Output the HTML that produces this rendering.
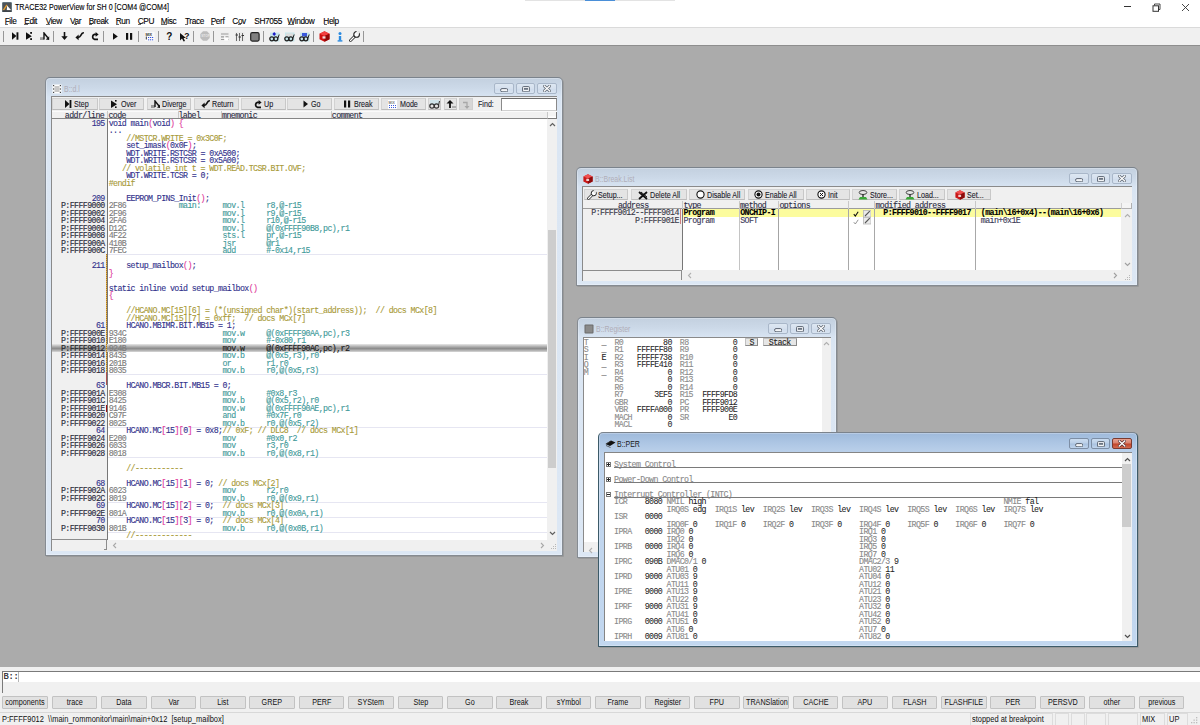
<!DOCTYPE html><html><head><meta charset="utf-8"><style>
*{margin:0;padding:0;box-sizing:border-box}
html,body{width:1200px;height:725px;overflow:hidden;background:#ababab;position:relative}
.s{position:absolute;font-family:"Liberation Sans",sans-serif;font-size:7.5px;line-height:9px;white-space:pre;color:#1a1a1a}
.m{position:absolute;font-family:"Liberation Mono",monospace;-webkit-text-stroke:0.12px currentColor;font-size:8.3px;line-height:7.5px;letter-spacing:-0.605px;white-space:pre}
svg{display:block}
.btn{position:absolute;background:#e1e1e1;border:1px solid #c2c2c2}
</style></head><body><div style="position:absolute;left:0px;top:0px;width:1200px;height:45px;background:#fff"></div>
<div style="position:absolute;left:525px;top:0px;width:150px;height:1px;background:#e3e3e3"></div>
<div style="position:absolute;left:585px;top:0px;width:30px;height:1px;background:#4a8fd8"></div>
<svg style="position:absolute;left:1.5px;top:1.5px" width="10" height="10.5"><rect x="0.3" y="0.3" width="9.4" height="9.8" rx="1.2" fill="#505458" stroke="#4a6a78" stroke-width="0.6"/><polygon points="0.6,8.3 4.4,2.4 5.4,3.5 2.2,8.3" fill="#e8a030"/><polygon points="5.1,3.4 9.2,8.3 4.8,8.3" fill="#fff"/><rect x="0.6" y="8.4" width="8.8" height="1.3" fill="#3a3e42"/></svg>
<div class="s" style="left:14.5px;top:2.9px;font-size:8.4px;transform:scaleX(0.85);transform-origin:0 0;color:#000;-webkit-text-stroke:0.12px #000">TRACE32 PowerView for SH 0 [COM4 @COM4]</div>
<div style="position:absolute;left:1124.2px;top:6px;width:7px;height:1px;background:#333"></div>
<svg style="position:absolute;left:1151.5px;top:2.5px" width="9" height="9"><path d="M2.5,2.5V1H8V6.5H6.5" stroke="#333" stroke-width="0.9" fill="none"/><rect x="1" y="2.8" width="5.5" height="5.5" fill="none" stroke="#333" stroke-width="1"/></svg>
<svg style="position:absolute;left:1180.5px;top:2.5px" width="9" height="9"><path d="M1,1L8,8M8,1L1,8" stroke="#333" stroke-width="0.9"/></svg>
<div class="s" style="left:4.7px;top:16.6px;font-size:8.3px;letter-spacing:-0.4px;color:#000;-webkit-text-stroke:0.1px #000">File</div>
<div class="s" style="left:24.3px;top:16.6px;font-size:8.3px;letter-spacing:-0.4px;color:#000;-webkit-text-stroke:0.1px #000">Edit</div>
<div class="s" style="left:45.7px;top:16.6px;font-size:8.3px;letter-spacing:-0.4px;color:#000;-webkit-text-stroke:0.1px #000">View</div>
<div class="s" style="left:70px;top:16.6px;font-size:8.3px;letter-spacing:-0.4px;color:#000;-webkit-text-stroke:0.1px #000">Var</div>
<div class="s" style="left:88.7px;top:16.6px;font-size:8.3px;letter-spacing:-0.4px;color:#000;-webkit-text-stroke:0.1px #000">Break</div>
<div class="s" style="left:115.7px;top:16.6px;font-size:8.3px;letter-spacing:-0.4px;color:#000;-webkit-text-stroke:0.1px #000">Run</div>
<div class="s" style="left:137.7px;top:16.6px;font-size:8.3px;letter-spacing:-0.4px;color:#000;-webkit-text-stroke:0.1px #000">CPU</div>
<div class="s" style="left:160.7px;top:16.6px;font-size:8.3px;letter-spacing:-0.4px;color:#000;-webkit-text-stroke:0.1px #000">Misc</div>
<div class="s" style="left:185px;top:16.6px;font-size:8.3px;letter-spacing:-0.4px;color:#000;-webkit-text-stroke:0.1px #000">Trace</div>
<div class="s" style="left:210.7px;top:16.6px;font-size:8.3px;letter-spacing:-0.4px;color:#000;-webkit-text-stroke:0.1px #000">Perf</div>
<div class="s" style="left:232.3px;top:16.6px;font-size:8.3px;letter-spacing:-0.4px;color:#000;-webkit-text-stroke:0.1px #000">Cov</div>
<div class="s" style="left:254.3px;top:16.6px;font-size:8.3px;letter-spacing:-0.4px;color:#000;-webkit-text-stroke:0.1px #000">SH7055</div>
<div class="s" style="left:287.3px;top:16.6px;font-size:8.3px;letter-spacing:-0.4px;color:#000;-webkit-text-stroke:0.1px #000">Window</div>
<div class="s" style="left:323.3px;top:16.6px;font-size:8.3px;letter-spacing:-0.4px;color:#000;-webkit-text-stroke:0.1px #000">Help</div>
<div style="position:absolute;left:0px;top:26.5px;width:1200px;height:18.5px;background:#f0f0f0;border-top:1px solid #dadada"></div>
<div style="position:absolute;left:0px;top:44.5px;width:1200px;height:1px;background:#8e8e8e"></div>
<div style="position:absolute;left:0px;top:667.4px;width:1200px;height:57.6px;background:#f0f0f0"></div>
<div style="position:absolute;left:2px;top:671px;width:1198px;height:21.5px;border-left:1px solid #7a7a7a;border-top:1px solid #7a7a7a"></div>
<div style="position:absolute;left:3px;top:672px;width:1197px;height:10px;background:#fff"></div>
<div class="m" style="left:3.4px;top:674.1px;font-size:8.8px;letter-spacing:-0.28px;-webkit-text-stroke:0.2px #1a1a2a"><span style="color:#1a1a2a">B::</span></div>
<div style="position:absolute;left:18px;top:671.5px;width:1px;height:10.5px;background:#b4b4b4"></div>
<div class="btn" style="left:2.3px;top:696.3px;width:45.7px;height:12.3px;border-radius:1px"></div>
<div class="s" style="left:2.3px;top:697.8px;width:45.7px;text-align:center;font-size:8.3px;transform:scaleX(0.87);transform-origin:50% 0;color:#111">components</div>
<div class="btn" style="left:51.7px;top:696.3px;width:45.7px;height:12.3px;border-radius:1px"></div>
<div class="s" style="left:51.7px;top:697.8px;width:45.7px;text-align:center;font-size:8.3px;transform:scaleX(0.87);transform-origin:50% 0;color:#111">trace</div>
<div class="btn" style="left:101.1px;top:696.3px;width:45.7px;height:12.3px;border-radius:1px"></div>
<div class="s" style="left:101.1px;top:697.8px;width:45.7px;text-align:center;font-size:8.3px;transform:scaleX(0.87);transform-origin:50% 0;color:#111">Data</div>
<div class="btn" style="left:150.5px;top:696.3px;width:45.7px;height:12.3px;border-radius:1px"></div>
<div class="s" style="left:150.5px;top:697.8px;width:45.7px;text-align:center;font-size:8.3px;transform:scaleX(0.87);transform-origin:50% 0;color:#111">Var</div>
<div class="btn" style="left:199.9px;top:696.3px;width:45.7px;height:12.3px;border-radius:1px"></div>
<div class="s" style="left:199.9px;top:697.8px;width:45.7px;text-align:center;font-size:8.3px;transform:scaleX(0.87);transform-origin:50% 0;color:#111">List</div>
<div class="btn" style="left:249.3px;top:696.3px;width:45.7px;height:12.3px;border-radius:1px"></div>
<div class="s" style="left:249.3px;top:697.8px;width:45.7px;text-align:center;font-size:8.3px;transform:scaleX(0.87);transform-origin:50% 0;color:#111">GREP</div>
<div class="btn" style="left:298.7px;top:696.3px;width:45.7px;height:12.3px;border-radius:1px"></div>
<div class="s" style="left:298.7px;top:697.8px;width:45.7px;text-align:center;font-size:8.3px;transform:scaleX(0.87);transform-origin:50% 0;color:#111">PERF</div>
<div class="btn" style="left:348.1px;top:696.3px;width:45.7px;height:12.3px;border-radius:1px"></div>
<div class="s" style="left:348.1px;top:697.8px;width:45.7px;text-align:center;font-size:8.3px;transform:scaleX(0.87);transform-origin:50% 0;color:#111">SYStem</div>
<div class="btn" style="left:397.5px;top:696.3px;width:45.7px;height:12.3px;border-radius:1px"></div>
<div class="s" style="left:397.5px;top:697.8px;width:45.7px;text-align:center;font-size:8.3px;transform:scaleX(0.87);transform-origin:50% 0;color:#111">Step</div>
<div class="btn" style="left:446.9px;top:696.3px;width:45.7px;height:12.3px;border-radius:1px"></div>
<div class="s" style="left:446.9px;top:697.8px;width:45.7px;text-align:center;font-size:8.3px;transform:scaleX(0.87);transform-origin:50% 0;color:#111">Go</div>
<div class="btn" style="left:496.3px;top:696.3px;width:45.7px;height:12.3px;border-radius:1px"></div>
<div class="s" style="left:496.3px;top:697.8px;width:45.7px;text-align:center;font-size:8.3px;transform:scaleX(0.87);transform-origin:50% 0;color:#111">Break</div>
<div class="btn" style="left:545.7px;top:696.3px;width:45.7px;height:12.3px;border-radius:1px"></div>
<div class="s" style="left:545.7px;top:697.8px;width:45.7px;text-align:center;font-size:8.3px;transform:scaleX(0.87);transform-origin:50% 0;color:#111">sYmbol</div>
<div class="btn" style="left:595.1px;top:696.3px;width:45.7px;height:12.3px;border-radius:1px"></div>
<div class="s" style="left:595.1px;top:697.8px;width:45.7px;text-align:center;font-size:8.3px;transform:scaleX(0.87);transform-origin:50% 0;color:#111">Frame</div>
<div class="btn" style="left:644.5px;top:696.3px;width:45.7px;height:12.3px;border-radius:1px"></div>
<div class="s" style="left:644.5px;top:697.8px;width:45.7px;text-align:center;font-size:8.3px;transform:scaleX(0.87);transform-origin:50% 0;color:#111">Register</div>
<div class="btn" style="left:693.9px;top:696.3px;width:45.7px;height:12.3px;border-radius:1px"></div>
<div class="s" style="left:693.9px;top:697.8px;width:45.7px;text-align:center;font-size:8.3px;transform:scaleX(0.87);transform-origin:50% 0;color:#111">FPU</div>
<div class="btn" style="left:743.3px;top:696.3px;width:45.7px;height:12.3px;border-radius:1px"></div>
<div class="s" style="left:743.3px;top:697.8px;width:45.7px;text-align:center;font-size:8.3px;transform:scaleX(0.87);transform-origin:50% 0;color:#111">TRANSlation</div>
<div class="btn" style="left:792.7px;top:696.3px;width:45.7px;height:12.3px;border-radius:1px"></div>
<div class="s" style="left:792.7px;top:697.8px;width:45.7px;text-align:center;font-size:8.3px;transform:scaleX(0.87);transform-origin:50% 0;color:#111">CACHE</div>
<div class="btn" style="left:842.1px;top:696.3px;width:45.7px;height:12.3px;border-radius:1px"></div>
<div class="s" style="left:842.1px;top:697.8px;width:45.7px;text-align:center;font-size:8.3px;transform:scaleX(0.87);transform-origin:50% 0;color:#111">APU</div>
<div class="btn" style="left:891.5px;top:696.3px;width:45.7px;height:12.3px;border-radius:1px"></div>
<div class="s" style="left:891.5px;top:697.8px;width:45.7px;text-align:center;font-size:8.3px;transform:scaleX(0.87);transform-origin:50% 0;color:#111">FLASH</div>
<div class="btn" style="left:940.9px;top:696.3px;width:45.7px;height:12.3px;border-radius:1px"></div>
<div class="s" style="left:940.9px;top:697.8px;width:45.7px;text-align:center;font-size:8.3px;transform:scaleX(0.87);transform-origin:50% 0;color:#111">FLASHFILE</div>
<div class="btn" style="left:990.3px;top:696.3px;width:45.7px;height:12.3px;border-radius:1px"></div>
<div class="s" style="left:990.3px;top:697.8px;width:45.7px;text-align:center;font-size:8.3px;transform:scaleX(0.87);transform-origin:50% 0;color:#111">PER</div>
<div class="btn" style="left:1039.7px;top:696.3px;width:45.7px;height:12.3px;border-radius:1px"></div>
<div class="s" style="left:1039.7px;top:697.8px;width:45.7px;text-align:center;font-size:8.3px;transform:scaleX(0.87);transform-origin:50% 0;color:#111">PERSVD</div>
<div class="btn" style="left:1089.1px;top:696.3px;width:45.7px;height:12.3px;border-radius:1px"></div>
<div class="s" style="left:1089.1px;top:697.8px;width:45.7px;text-align:center;font-size:8.3px;transform:scaleX(0.87);transform-origin:50% 0;color:#111">other</div>
<div class="btn" style="left:1138.5px;top:696.3px;width:45.7px;height:12.3px;border-radius:1px"></div>
<div class="s" style="left:1138.5px;top:697.8px;width:45.7px;text-align:center;font-size:8.3px;transform:scaleX(0.87);transform-origin:50% 0;color:#111">previous</div>
<div style="position:absolute;left:0px;top:712px;width:1200px;height:1px;background:#d8d8d8"></div>
<div class="s" style="left:2px;top:714.5px;font-size:8.3px;transform:scaleX(0.9);transform-origin:0 0;color:#111">P:FFFF9012  \\main_rommonitor\main\main+0x12  [setup_mailbox]</div>
<div style="position:absolute;left:970.4px;top:713px;width:82.60000000000002px;height:12px;border:1px solid #dcdcdc;border-bottom:none"></div>
<div class="s" style="left:972.4px;top:714.5px;font-size:8.3px;transform:scaleX(0.9);transform-origin:0 0;color:#111">stopped at breakpoint</div>
<div style="position:absolute;left:1054.5px;top:713px;width:14.0px;height:12px;border:1px solid #dcdcdc;border-bottom:none"></div>
<div style="position:absolute;left:1070.5px;top:713px;width:14.0px;height:12px;border:1px solid #dcdcdc;border-bottom:none"></div>
<div style="position:absolute;left:1086px;top:713px;width:20px;height:12px;border:1px solid #dcdcdc;border-bottom:none"></div>
<div style="position:absolute;left:1108px;top:713px;width:30px;height:12px;border:1px solid #dcdcdc;border-bottom:none"></div>
<div style="position:absolute;left:1140px;top:713px;width:25px;height:12px;border:1px solid #dcdcdc;border-bottom:none"></div>
<div class="s" style="left:1142px;top:714.5px;font-size:8.3px;transform:scaleX(0.9);transform-origin:0 0;color:#111">MIX</div>
<div style="position:absolute;left:1167px;top:713px;width:21px;height:12px;border:1px solid #dcdcdc;border-bottom:none"></div>
<div class="s" style="left:1169px;top:714.5px;font-size:8.3px;transform:scaleX(0.9);transform-origin:0 0;color:#111">UP</div>
<div style="position:absolute;left:45px;top:77px;width:518px;height:479px;background:linear-gradient(#c3d0df 0px,#ccd9e8 10px,#d8e4f2 19px,#dbe6f3 30px,#dce7f4 100%);border:1px solid #858b92;border-top-color:#7b838c;border-radius:5px 5px 1px 1px;box-shadow:inset 0 0 0 1px rgba(255,255,255,0.25),1px 1px 0 rgba(0,0,0,0.10)"></div>
<div style="position:absolute;left:51.8px;top:83.6px;width:10px;height:10px"><svg width="10" height="10"><rect x="0.5" y="0.5" width="9" height="9" fill="#fff"/><rect x="2.5" y="2" width="5" height="6" fill="#c8c8c8"/><g fill="#444"><rect x="1" y="1" width="1.2" height="1.2"/><rect x="7.8" y="1" width="1.2" height="1.2"/><rect x="1" y="4.4" width="1.2" height="1.2"/><rect x="7.8" y="4.4" width="1.2" height="1.2"/><rect x="1" y="7.8" width="1.2" height="1.2"/><rect x="7.8" y="7.8" width="1.2" height="1.2"/></g></svg></div>
<div class="s" style="left:64.2px;top:84.7px;font-size:8.7px;transform:scaleX(0.8);transform-origin:0 0;color:#b0aeb8">B::d.l</div>
<div style="position:absolute;left:494.3px;top:83.2px;width:19.700000000000003px;height:11.2px;background:linear-gradient(#dde7f2 0%,#d5e0ee 50%,#cfdcec 55%,#d8e3f0 100%);border:1px solid #a9b7c9;border-radius:2px"></div>
<svg style="position:absolute;left:499.95000000000005px;top:87.89999999999999px" width="8.5" height="4.5"><rect x="0.6" y="0.6" width="7.2" height="3.2" rx="1.4" fill="#f4f6f8" stroke="#5a6472" stroke-width="1"/></svg>
<div style="position:absolute;left:516px;top:83.2px;width:19px;height:11.2px;background:linear-gradient(#dde7f2 0%,#d5e0ee 50%,#cfdcec 55%,#d8e3f0 100%);border:1px solid #a9b7c9;border-radius:2px"></div>
<svg style="position:absolute;left:521.5px;top:85.6px" width="8" height="6.5"><rect x="0.6" y="0.6" width="6.8" height="5.2" rx="0.8" fill="#f4f6f8" stroke="#5a6472" stroke-width="1"/><rect x="2" y="2" width="4" height="1.8" fill="#6a7482"/></svg>
<div style="position:absolute;left:537px;top:83.2px;width:20px;height:11.2px;background:linear-gradient(#dde7f2 0%,#d5e0ee 50%,#cfdcec 55%,#d8e3f0 100%);border:1px solid #a9b7c9;border-radius:2px"></div>
<svg style="position:absolute;left:543.0px;top:85.2px" width="8" height="7"><path d="M1.2,1L6.8,6M6.8,1L1.2,6" stroke="#5d6672" stroke-width="2.9" stroke-linecap="square"/><path d="M1.2,1L6.8,6M6.8,1L1.2,6" stroke="#fff" stroke-width="1.3" stroke-linecap="square"/></svg>
<div style="position:absolute;left:51px;top:96px;width:506px;height:455px;background:#f0f0f0;border-left:1px solid #8a8a8a;border-top:1px solid #8a8a8a"></div>
<div style="position:absolute;left:52.2px;top:98.2px;width:45.5px;height:12.299999999999997px;background:#e4e4e4;border:1px solid #d2d2d2;border-bottom-color:#bcbcbc;border-right-color:#c8c8c8"></div>
<svg style="position:absolute;left:64.7px;top:100.3px" width="7" height="8"><polygon points="0,0 4.5,4 0,8" fill="#111"/><rect x="4.6" y="0" width="1.8" height="8" fill="#111"/></svg>
<div class="s" style="left:74.2px;top:100.10000000000001px;font-size:8.2px;transform:scaleX(0.87);transform-origin:0 0;color:#1a1a2a;-webkit-text-stroke:0.1px #1a1a2a">Step</div>
<div style="position:absolute;left:99.3px;top:98.2px;width:45.000000000000014px;height:12.299999999999997px;background:#e4e4e4;border:1px solid #d2d2d2;border-bottom-color:#bcbcbc;border-right-color:#c8c8c8"></div>
<svg style="position:absolute;left:110.5px;top:100.3px" width="8" height="8"><polygon points="0,0.5 6,4.2 0,8" fill="#111"/><rect x="4" y="0" width="1.6" height="1.6" fill="#111"/><rect x="4" y="6.4" width="1.6" height="1.6" fill="#111"/></svg>
<div class="s" style="left:120.6px;top:100.10000000000001px;font-size:8.2px;transform:scaleX(0.87);transform-origin:0 0;color:#1a1a2a;-webkit-text-stroke:0.1px #1a1a2a">Over</div>
<div style="position:absolute;left:146.5px;top:98.2px;width:44.5px;height:12.299999999999997px;background:#e4e4e4;border:1px solid #d2d2d2;border-bottom-color:#bcbcbc;border-right-color:#c8c8c8"></div>
<svg style="position:absolute;left:150.5px;top:100.3px" width="10" height="8"><rect x="0" y="5" width="4" height="3" fill="#9a9a9a"/><path d="M4,7V1L8,6" stroke="#111" stroke-width="1.4" fill="none"/><polygon points="9,8 6,7.5 9,4.5" fill="#111"/></svg>
<div class="s" style="left:162.3px;top:100.10000000000001px;font-size:8.2px;transform:scaleX(0.87);transform-origin:0 0;color:#1a1a2a;-webkit-text-stroke:0.1px #1a1a2a">Diverge</div>
<div style="position:absolute;left:193.5px;top:98.2px;width:45.0px;height:12.299999999999997px;background:#e4e4e4;border:1px solid #d2d2d2;border-bottom-color:#bcbcbc;border-right-color:#c8c8c8"></div>
<svg style="position:absolute;left:200.5px;top:100.3px" width="10" height="9"><path d="M8.8,0.9C7.6,0.6 6.6,1.6 5.8,3.4C5.2,4.8 4.3,5.4 2.8,5.4" stroke="#111" stroke-width="1.6" fill="none"/><polygon points="0.4,5.5 3.6,2.6 3.6,8.2" fill="#111"/></svg>
<div class="s" style="left:211.6px;top:100.10000000000001px;font-size:8.2px;transform:scaleX(0.87);transform-origin:0 0;color:#1a1a2a;-webkit-text-stroke:0.1px #1a1a2a">Return</div>
<div style="position:absolute;left:240.7px;top:98.2px;width:45.0px;height:12.299999999999997px;background:#e4e4e4;border:1px solid #d2d2d2;border-bottom-color:#bcbcbc;border-right-color:#c8c8c8"></div>
<svg style="position:absolute;left:253.8px;top:100.3px" width="8" height="9"><path d="M7,7.4H3.6A2.6,2.6 0 0 1 3.4,2.4H5" stroke="#111" stroke-width="1.7" fill="none"/><polygon points="4.6,0 7.6,2.4 4.6,4.8" fill="#111"/></svg>
<div class="s" style="left:263.8px;top:100.10000000000001px;font-size:8.2px;transform:scaleX(0.87);transform-origin:0 0;color:#1a1a2a;-webkit-text-stroke:0.1px #1a1a2a">Up</div>
<div style="position:absolute;left:287.3px;top:98.2px;width:45.0px;height:12.299999999999997px;background:#e4e4e4;border:1px solid #d2d2d2;border-bottom-color:#bcbcbc;border-right-color:#c8c8c8"></div>
<svg style="position:absolute;left:302.5px;top:100.3px" width="6" height="8"><polygon points="0.5,0.5 5,4 0.5,7.5" fill="#111"/></svg>
<div class="s" style="left:311.4px;top:100.10000000000001px;font-size:8.2px;transform:scaleX(0.87);transform-origin:0 0;color:#1a1a2a;-webkit-text-stroke:0.1px #1a1a2a">Go</div>
<div style="position:absolute;left:334px;top:98.2px;width:44.69999999999999px;height:12.299999999999997px;background:#e4e4e4;border:1px solid #d2d2d2;border-bottom-color:#bcbcbc;border-right-color:#c8c8c8"></div>
<svg style="position:absolute;left:343.5px;top:100.3px" width="7" height="8"><rect x="0" y="0.5" width="2.2" height="7" fill="#111"/><rect x="4" y="0.5" width="2.2" height="7" fill="#111"/></svg>
<div class="s" style="left:353.6px;top:100.10000000000001px;font-size:8.2px;transform:scaleX(0.87);transform-origin:0 0;color:#1a1a2a;-webkit-text-stroke:0.1px #1a1a2a">Break</div>
<div style="position:absolute;left:381px;top:98.2px;width:44.69999999999999px;height:12.299999999999997px;background:#e4e4e4;border:1px solid #d2d2d2;border-bottom-color:#bcbcbc;border-right-color:#c8c8c8"></div>
<svg style="position:absolute;left:388.2px;top:99.8px" width="9" height="9"><rect x="0" y="0" width="9" height="9" fill="#fff"/><text x="0.5" y="3.5" font-size="3.5" font-family="Liberation Sans" fill="#333">MIX</text><path d="M1,5.5H8M1,7.5H8" stroke="#3a5adc" stroke-width="1" stroke-dasharray="1,1"/></svg>
<div class="s" style="left:399.6px;top:100.10000000000001px;font-size:8.2px;transform:scaleX(0.87);transform-origin:0 0;color:#1a1a2a;-webkit-text-stroke:0.1px #1a1a2a">Mode</div>
<div style="position:absolute;left:427.6px;top:98.2px;width:13.399999999999977px;height:12.299999999999997px;background:#e4e4e4;border:1px solid #d2d2d2;border-bottom-color:#bcbcbc;border-right-color:#c8c8c8"></div>
<svg style="position:absolute;left:429.3px;top:99.8px" width="11" height="9"><rect x="1" y="0" width="9" height="5" fill="#cfe4ea"/><circle cx="3" cy="6" r="2.2" stroke="#333" stroke-width="1.2" fill="none"/><circle cx="7.5" cy="6" r="2.2" stroke="#333" stroke-width="1.2" fill="none"/><path d="M9.5,5.5L10.5,1" stroke="#333" stroke-width="1"/></svg>
<div style="position:absolute;left:443.6px;top:98.2px;width:13.799999999999955px;height:12.299999999999997px;background:#e4e4e4;border:1px solid #d2d2d2;border-bottom-color:#bcbcbc;border-right-color:#c8c8c8"></div>
<svg style="position:absolute;left:446px;top:100px" width="10" height="8"><path d="M4,8V2" stroke="#111" stroke-width="1.8"/><polygon points="0.5,3.5 4,0 7.5,3.5" fill="#111"/><rect x="6.5" y="6.5" width="1" height="1" fill="#111"/><rect x="8.5" y="6.5" width="1" height="1" fill="#111"/></svg>
<div style="position:absolute;left:459px;top:98.2px;width:14px;height:12.3px;background:#d6d6d6;border:1px solid #cfcfcf"></div>
<svg style="position:absolute;left:462px;top:100.5px" width="8" height="8"><path d="M1,1.5H5V6.5" stroke="#a8a8a8" stroke-width="1.3" fill="none"/><polygon points="2.5,5 5,8 7.5,5" fill="#a8a8a8"/></svg>
<div class="s" style="left:478.4px;top:99.9px;font-size:8.2px;transform:scaleX(0.87);transform-origin:0 0;color:#1a1a2a;-webkit-text-stroke:0.1px #1a1a2a">Find:</div>
<div style="position:absolute;left:500.5px;top:97.5px;width:56.5px;height:13.5px;background:#fff;border-top:1px solid #6a6a6a;border-left:1px solid #8a8a8a;border-right:1px solid #8a8a8a;border-bottom:1px solid #cfcfcf"></div>
<div style="position:absolute;left:52px;top:111.2px;width:505px;height:8.2px;background:#f0f0f0;border-top:1px solid #fafafa;border-bottom:1.4px solid #868686"></div>
<div style="position:absolute;left:107.2px;top:111.2px;width:1px;height:7px;background:#c8c8c8"></div>
<div style="position:absolute;left:177.7px;top:111.2px;width:1px;height:7px;background:#c8c8c8"></div>
<div style="position:absolute;left:221px;top:111.2px;width:1px;height:7px;background:#c8c8c8"></div>
<div style="position:absolute;left:330.7px;top:111.2px;width:1px;height:7px;background:#c8c8c8"></div>
<div class="m" style="left:64.825px;top:111.8px;"><span style="color:#2e2e44">addr/line</span></div>
<div class="m" style="left:108.5px;top:111.8px;"><span style="color:#2e2e44">code</span></div>
<div class="m" style="left:178.4px;top:111.8px;"><span style="color:#2e2e44">label</span></div>
<div class="m" style="left:222.1px;top:111.8px;"><span style="color:#2e2e44">mnemonic</span></div>
<div class="m" style="left:331.8px;top:111.8px;"><span style="color:#2e2e44">comment</span></div>
<div style="position:absolute;left:546.5px;top:111.5px;width:10.5px;height:7.5px;background:#f4f4f4;border:1px solid #7a7a7a;border-top:none;border-left:1px solid #c8c8c8;box-shadow:inset 0 -1.5px 0 #fff"></div>
<div style="position:absolute;left:52px;top:119.4px;width:55.5px;height:420.30000000000007px;background:#f0f0f0"></div>
<div style="position:absolute;left:107.5px;top:119.4px;width:439.7px;height:420.30000000000007px;background:#fff"></div>
<div style="position:absolute;left:107px;top:119.4px;width:1px;height:420.30000000000007px;background:#777"></div>
<div style="position:absolute;left:547.2px;top:119.4px;width:9.6px;height:420.30000000000007px;background:#f0f0f0"></div>
<div style="position:absolute;left:547.6px;top:230px;width:8.8px;height:238px;background:#cdcdcd"></div>
<svg style="position:absolute;left:548.5px;top:122px" width="7" height="5"><path d="M1,4L3.5,1.5L6,4" stroke="#606060" stroke-width="1.2" fill="none"/></svg>
<svg style="position:absolute;left:548.5px;top:531px" width="7" height="5"><path d="M1,1L3.5,3.5L6,1" stroke="#606060" stroke-width="1.2" fill="none"/></svg>
<div style="position:absolute;left:52px;top:539.7px;width:505px;height:10.5px;background:#f0f0f0"></div>
<div style="position:absolute;left:52px;top:539.4000000000001px;width:55px;height:1px;background:#8c8c8c"></div>
<div style="position:absolute;left:106px;top:539.7px;width:1px;height:10.4px;background:#8c8c8c"></div>
<div style="position:absolute;left:104px;top:549.3000000000001px;width:3px;height:1px;background:#8c8c8c"></div>
<svg style="position:absolute;left:112px;top:541.5px" width="5" height="7"><path d="M4,1L1.5,3.5L4,6" stroke="#a8a8a8" stroke-width="1.1" fill="none"/></svg>
<svg style="position:absolute;left:540px;top:541.5px" width="5" height="7"><path d="M1,1L3.5,3.5L1,6" stroke="#a8a8a8" stroke-width="1.1" fill="none"/></svg>
<svg style="position:absolute;left:549px;top:542px" width="8" height="8"><g fill="#b8b8b8"><rect x="6" y="2" width="1" height="1"/><rect x="4" y="4" width="1" height="1"/><rect x="6" y="4" width="1" height="1"/><rect x="2" y="6" width="1" height="1"/><rect x="4" y="6" width="1" height="1"/><rect x="6" y="6" width="1" height="1"/></g></svg>
<div style="position:absolute;left:108px;top:254.1px;width:439px;height:1px;background:#e6e6f2"></div>
<div style="position:absolute;left:108px;top:374.09999999999997px;width:439px;height:1px;background:#e6e6f2"></div>
<div style="position:absolute;left:108px;top:426.59999999999997px;width:439px;height:1px;background:#e6e6f2"></div>
<div style="position:absolute;left:108px;top:456.59999999999997px;width:439px;height:1px;background:#e6e6f2"></div>
<div style="position:absolute;left:108px;top:501.59999999999997px;width:439px;height:1px;background:#e6e6f2"></div>
<div style="position:absolute;left:108px;top:516.6px;width:439px;height:1px;background:#e6e6f2"></div>
<div style="position:absolute;left:108px;top:531.6px;width:439px;height:1px;background:#e6e6f2"></div>
<div style="position:absolute;left:52px;top:344.45px;width:495.2px;height:7.5px;background:linear-gradient(#e8e8e8 0%,#b4b4b4 30%,#8c8c8c 55%,#a8a8a8 75%,#d8d8d8 100%)"></div>
<div class="m" style="left:108.75px;top:119.7px;"><span style="color:#32328c">void main</span><span style="color:#e0389a">(</span><span style="color:#32328c">void</span><span style="color:#e0389a">)</span><span style="color:#32328c"> </span><span style="color:#e0389a">{</span></div>
<div class="m" style="left:91.625px;top:119.7px;"><span style="color:#32328c">195</span></div>
<div class="m" style="left:108.75px;top:127.2px;"><span style="color:#32328c">...</span></div>
<div class="m" style="left:108.75px;top:134.7px;"><span style="color:#32328c">    </span><span style="color:#a89a38">//MSTCR.WRITE = 0x3C0F;</span></div>
<div class="m" style="left:108.75px;top:142.2px;"><span style="color:#32328c">    set_imask</span><span style="color:#e0389a">(</span><span style="color:#32328c">0x0F</span><span style="color:#e0389a">)</span><span style="color:#32328c">;</span></div>
<div class="m" style="left:108.75px;top:149.7px;"><span style="color:#32328c">    WDT.WRITE.RSTCSR = 0xA500;</span></div>
<div class="m" style="left:108.75px;top:157.2px;"><span style="color:#32328c">    WDT.WRITE.RSTCSR = 0x5A00;</span></div>
<div class="m" style="left:108.75px;top:164.7px;"><span style="color:#32328c">   </span><span style="color:#a89a38">// volatile int t = WDT.READ.TCSR.BIT.OVF;</span></div>
<div class="m" style="left:108.75px;top:172.2px;"><span style="color:#32328c">    WDT.WRITE.TCSR = 0;</span></div>
<div class="m" style="left:108.75px;top:179.7px;"><span style="color:#a89a38">#endif</span></div>
<div class="m" style="left:108.75px;top:194.7px;"><span style="color:#32328c">    EEPROM_PINS_Init</span><span style="color:#e0389a">(</span><span style="color:#e0389a">)</span><span style="color:#32328c">;</span></div>
<div class="m" style="left:91.625px;top:194.7px;"><span style="color:#32328c">209</span></div>
<div class="m" style="left:108.75px;top:262.2px;"><span style="color:#32328c">    setup_mailbox</span><span style="color:#e0389a">(</span><span style="color:#e0389a">)</span><span style="color:#32328c">;</span></div>
<div class="m" style="left:91.625px;top:262.2px;"><span style="color:#32328c">211</span></div>
<div class="m" style="left:108.75px;top:269.7px;"><span style="color:#e0389a">}</span></div>
<div class="m" style="left:108.75px;top:284.7px;"><span style="color:#32328c">static inline void setup_mailbox</span><span style="color:#e0389a">(</span><span style="color:#e0389a">)</span></div>
<div class="m" style="left:108.75px;top:292.2px;"><span style="color:#e0389a">{</span></div>
<div class="m" style="left:108.75px;top:307.2px;"><span style="color:#32328c">    </span><span style="color:#a89a38">//HCANO.MC[15][6] = (*(unsigned char*)(start_address));  // docs MCx[8]</span></div>
<div class="m" style="left:108.75px;top:314.7px;"><span style="color:#32328c">    </span><span style="color:#a89a38">//HCANO.MC[15][7] = 0xff;  // docs MCx[7]</span></div>
<div class="m" style="left:108.75px;top:322.2px;"><span style="color:#32328c">    HCANO.MBIMR.BIT.MB15 = 1;</span></div>
<div class="m" style="left:96.0px;top:322.2px;"><span style="color:#32328c">61</span></div>
<div class="m" style="left:108.75px;top:382.2px;"><span style="color:#32328c">    HCANO.MBCR.BIT.MB15 = 0;</span></div>
<div class="m" style="left:96.0px;top:382.2px;"><span style="color:#32328c">63</span></div>
<div class="m" style="left:108.75px;top:427.2px;"><span style="color:#32328c">    HCANO.MC</span><span style="color:#e0389a">[</span><span style="color:#32328c">15</span><span style="color:#e0389a">]</span><span style="color:#e0389a">[</span><span style="color:#32328c">0</span><span style="color:#e0389a">]</span><span style="color:#32328c"> = 0x8;</span><span style="color:#a89a38">// 0xF; // DLC8  // docs MCx[1]</span></div>
<div class="m" style="left:96.0px;top:427.2px;"><span style="color:#32328c">64</span></div>
<div class="m" style="left:108.75px;top:464.7px;"><span style="color:#32328c">    </span><span style="color:#a89a38">//-----------</span></div>
<div class="m" style="left:108.75px;top:479.7px;"><span style="color:#32328c">    HCANO.MC</span><span style="color:#e0389a">[</span><span style="color:#32328c">15</span><span style="color:#e0389a">]</span><span style="color:#e0389a">[</span><span style="color:#32328c">1</span><span style="color:#e0389a">]</span><span style="color:#32328c"> = 0; </span><span style="color:#a89a38">// docs MCx[2]</span></div>
<div class="m" style="left:96.0px;top:479.7px;"><span style="color:#32328c">68</span></div>
<div class="m" style="left:108.75px;top:502.2px;"><span style="color:#32328c">    HCANO.MC</span><span style="color:#e0389a">[</span><span style="color:#32328c">15</span><span style="color:#e0389a">]</span><span style="color:#e0389a">[</span><span style="color:#32328c">2</span><span style="color:#e0389a">]</span><span style="color:#32328c"> = 0;  </span><span style="color:#a89a38">// docs MCx[3]</span></div>
<div class="m" style="left:96.0px;top:502.2px;"><span style="color:#32328c">69</span></div>
<div class="m" style="left:108.75px;top:517.2px;"><span style="color:#32328c">    HCANO.MC</span><span style="color:#e0389a">[</span><span style="color:#32328c">15</span><span style="color:#e0389a">]</span><span style="color:#e0389a">[</span><span style="color:#32328c">3</span><span style="color:#e0389a">]</span><span style="color:#32328c"> = 0;  </span><span style="color:#a89a38">// docs MCx[4]</span></div>
<div class="m" style="left:96.0px;top:517.2px;"><span style="color:#32328c">70</span></div>
<div class="m" style="left:108.75px;top:532.2px;"><span style="color:#32328c">    </span><span style="color:#a89a38">//-------------</span></div>
<div class="m" style="left:61.0px;top:202.2px;"><span style="color:#2a2a3a">P:FFFF9000</span></div>
<div class="m" style="left:108.75px;top:202.2px;"><span style="color:#7c7c7c">2F86</span></div>
<div class="m" style="left:178.75px;top:202.2px;"><span style="color:#3f9a9a">main:</span></div>
<div class="m" style="left:222.5px;top:202.2px;"><span style="color:#3f9a9a">mov.l</span></div>
<div class="m" style="left:266.25px;top:202.2px;"><span style="color:#3f9a9a">r8,@-r15</span></div>
<div class="m" style="left:61.0px;top:209.7px;"><span style="color:#2a2a3a">P:FFFF9002</span></div>
<div class="m" style="left:108.75px;top:209.7px;"><span style="color:#7c7c7c">2F96</span></div>
<div class="m" style="left:222.5px;top:209.7px;"><span style="color:#3f9a9a">mov.l</span></div>
<div class="m" style="left:266.25px;top:209.7px;"><span style="color:#3f9a9a">r9,@-r15</span></div>
<div class="m" style="left:61.0px;top:217.2px;"><span style="color:#2a2a3a">P:FFFF9004</span></div>
<div class="m" style="left:108.75px;top:217.2px;"><span style="color:#7c7c7c">2FA6</span></div>
<div class="m" style="left:222.5px;top:217.2px;"><span style="color:#3f9a9a">mov.l</span></div>
<div class="m" style="left:266.25px;top:217.2px;"><span style="color:#3f9a9a">r10,@-r15</span></div>
<div class="m" style="left:61.0px;top:224.7px;"><span style="color:#2a2a3a">P:FFFF9006</span></div>
<div class="m" style="left:108.75px;top:224.7px;"><span style="color:#7c7c7c">D12C</span></div>
<div class="m" style="left:222.5px;top:224.7px;"><span style="color:#3f9a9a">mov.l</span></div>
<div class="m" style="left:266.25px;top:224.7px;"><span style="color:#3f9a9a">@(0xFFFF90B8,pc),r1</span></div>
<div class="m" style="left:61.0px;top:232.2px;"><span style="color:#2a2a3a">P:FFFF9008</span></div>
<div class="m" style="left:108.75px;top:232.2px;"><span style="color:#7c7c7c">4F22</span></div>
<div class="m" style="left:222.5px;top:232.2px;"><span style="color:#3f9a9a">sts.l</span></div>
<div class="m" style="left:266.25px;top:232.2px;"><span style="color:#3f9a9a">pr,@-r15</span></div>
<div class="m" style="left:61.0px;top:239.7px;"><span style="color:#2a2a3a">P:FFFF900A</span></div>
<div class="m" style="left:108.75px;top:239.7px;"><span style="color:#7c7c7c">410B</span></div>
<div class="m" style="left:222.5px;top:239.7px;"><span style="color:#3f9a9a">jsr</span></div>
<div class="m" style="left:266.25px;top:239.7px;"><span style="color:#3f9a9a">@r1</span></div>
<div class="m" style="left:61.0px;top:247.2px;"><span style="color:#2a2a3a">P:FFFF900C</span></div>
<div class="m" style="left:108.75px;top:247.2px;"><span style="color:#7c7c7c">7FEC</span></div>
<div class="m" style="left:222.5px;top:247.2px;"><span style="color:#3f9a9a">add</span></div>
<div class="m" style="left:266.25px;top:247.2px;"><span style="color:#3f9a9a">#-0x14,r15</span></div>
<div class="m" style="left:61.0px;top:329.7px;"><span style="color:#2a2a3a">P:FFFF900E</span></div>
<div class="m" style="left:108.75px;top:329.7px;"><span style="color:#7c7c7c">934C</span></div>
<div class="m" style="left:222.5px;top:329.7px;"><span style="color:#3f9a9a">mov.w</span></div>
<div class="m" style="left:266.25px;top:329.7px;"><span style="color:#3f9a9a">@(0xFFFF90AA,pc),r3</span></div>
<div class="m" style="left:61.0px;top:337.2px;"><span style="color:#2a2a3a">P:FFFF9010</span></div>
<div class="m" style="left:108.75px;top:337.2px;"><span style="color:#7c7c7c">E180</span></div>
<div class="m" style="left:222.5px;top:337.2px;"><span style="color:#3f9a9a">mov</span></div>
<div class="m" style="left:266.25px;top:337.2px;"><span style="color:#3f9a9a">#-0x80,r1</span></div>
<div class="m" style="left:61.0px;top:344.7px;"><span style="color:#1e1e28">P:FFFF9012</span></div>
<div class="m" style="left:108.75px;top:344.7px;"><span style="color:#7c7c7c">924B</span></div>
<div class="m" style="left:222.5px;top:344.7px;"><span style="color:#1a1a1a">mov.w</span></div>
<div class="m" style="left:266.25px;top:344.7px;"><span style="color:#1a1a1a">@(0xFFFF90AC,pc),r2</span></div>
<div class="m" style="left:61.0px;top:352.2px;"><span style="color:#2a2a3a">P:FFFF9014</span></div>
<div class="m" style="left:108.75px;top:352.2px;"><span style="color:#7c7c7c">8435</span></div>
<div class="m" style="left:222.5px;top:352.2px;"><span style="color:#3f9a9a">mov.b</span></div>
<div class="m" style="left:266.25px;top:352.2px;"><span style="color:#3f9a9a">@(0x5,r3),r0</span></div>
<div class="m" style="left:61.0px;top:359.7px;"><span style="color:#2a2a3a">P:FFFF9016</span></div>
<div class="m" style="left:108.75px;top:359.7px;"><span style="color:#7c7c7c">201B</span></div>
<div class="m" style="left:222.5px;top:359.7px;"><span style="color:#3f9a9a">or</span></div>
<div class="m" style="left:266.25px;top:359.7px;"><span style="color:#3f9a9a">r1,r0</span></div>
<div class="m" style="left:61.0px;top:367.2px;"><span style="color:#2a2a3a">P:FFFF9018</span></div>
<div class="m" style="left:108.75px;top:367.2px;"><span style="color:#7c7c7c">8035</span></div>
<div class="m" style="left:222.5px;top:367.2px;"><span style="color:#3f9a9a">mov.b</span></div>
<div class="m" style="left:266.25px;top:367.2px;"><span style="color:#3f9a9a">r0,@(0x5,r3)</span></div>
<div class="m" style="left:61.0px;top:389.7px;"><span style="color:#2a2a3a">P:FFFF901A</span></div>
<div class="m" style="left:108.75px;top:389.7px;"><span style="color:#7c7c7c">E308</span></div>
<div class="m" style="left:222.5px;top:389.7px;"><span style="color:#3f9a9a">mov</span></div>
<div class="m" style="left:266.25px;top:389.7px;"><span style="color:#3f9a9a">#0x8,r3</span></div>
<div class="m" style="left:61.0px;top:397.2px;"><span style="color:#2a2a3a">P:FFFF901C</span></div>
<div class="m" style="left:108.75px;top:397.2px;"><span style="color:#7c7c7c">8425</span></div>
<div class="m" style="left:222.5px;top:397.2px;"><span style="color:#3f9a9a">mov.b</span></div>
<div class="m" style="left:266.25px;top:397.2px;"><span style="color:#3f9a9a">@(0x5,r2),r0</span></div>
<div class="m" style="left:61.0px;top:404.7px;"><span style="color:#2a2a3a">P:FFFF901E</span></div>
<div class="m" style="left:108.75px;top:404.7px;"><span style="color:#7c7c7c">9146</span></div>
<div class="m" style="left:222.5px;top:404.7px;"><span style="color:#3f9a9a">mov.w</span></div>
<div class="m" style="left:266.25px;top:404.7px;"><span style="color:#3f9a9a">@(0xFFFF90AE,pc),r1</span></div>
<div class="m" style="left:61.0px;top:412.2px;"><span style="color:#2a2a3a">P:FFFF9020</span></div>
<div class="m" style="left:108.75px;top:412.2px;"><span style="color:#7c7c7c">C97F</span></div>
<div class="m" style="left:222.5px;top:412.2px;"><span style="color:#3f9a9a">and</span></div>
<div class="m" style="left:266.25px;top:412.2px;"><span style="color:#3f9a9a">#0x7F,r0</span></div>
<div class="m" style="left:61.0px;top:419.7px;"><span style="color:#2a2a3a">P:FFFF9022</span></div>
<div class="m" style="left:108.75px;top:419.7px;"><span style="color:#7c7c7c">8025</span></div>
<div class="m" style="left:222.5px;top:419.7px;"><span style="color:#3f9a9a">mov.b</span></div>
<div class="m" style="left:266.25px;top:419.7px;"><span style="color:#3f9a9a">r0,@(0x5,r2)</span></div>
<div class="m" style="left:61.0px;top:434.7px;"><span style="color:#2a2a3a">P:FFFF9024</span></div>
<div class="m" style="left:108.75px;top:434.7px;"><span style="color:#7c7c7c">E200</span></div>
<div class="m" style="left:222.5px;top:434.7px;"><span style="color:#3f9a9a">mov</span></div>
<div class="m" style="left:266.25px;top:434.7px;"><span style="color:#3f9a9a">#0x0,r2</span></div>
<div class="m" style="left:61.0px;top:442.2px;"><span style="color:#2a2a3a">P:FFFF9026</span></div>
<div class="m" style="left:108.75px;top:442.2px;"><span style="color:#7c7c7c">6033</span></div>
<div class="m" style="left:222.5px;top:442.2px;"><span style="color:#3f9a9a">mov</span></div>
<div class="m" style="left:266.25px;top:442.2px;"><span style="color:#3f9a9a">r3,r0</span></div>
<div class="m" style="left:61.0px;top:449.7px;"><span style="color:#2a2a3a">P:FFFF9028</span></div>
<div class="m" style="left:108.75px;top:449.7px;"><span style="color:#7c7c7c">8018</span></div>
<div class="m" style="left:222.5px;top:449.7px;"><span style="color:#3f9a9a">mov.b</span></div>
<div class="m" style="left:266.25px;top:449.7px;"><span style="color:#3f9a9a">r0,@(0x8,r1)</span></div>
<div class="m" style="left:61.0px;top:487.2px;"><span style="color:#2a2a3a">P:FFFF902A</span></div>
<div class="m" style="left:108.75px;top:487.2px;"><span style="color:#7c7c7c">6023</span></div>
<div class="m" style="left:222.5px;top:487.2px;"><span style="color:#3f9a9a">mov</span></div>
<div class="m" style="left:266.25px;top:487.2px;"><span style="color:#3f9a9a">r2,r0</span></div>
<div class="m" style="left:61.0px;top:494.7px;"><span style="color:#2a2a3a">P:FFFF902C</span></div>
<div class="m" style="left:108.75px;top:494.7px;"><span style="color:#7c7c7c">8019</span></div>
<div class="m" style="left:222.5px;top:494.7px;"><span style="color:#3f9a9a">mov.b</span></div>
<div class="m" style="left:266.25px;top:494.7px;"><span style="color:#3f9a9a">r0,@(0x9,r1)</span></div>
<div class="m" style="left:61.0px;top:509.7px;"><span style="color:#2a2a3a">P:FFFF902E</span></div>
<div class="m" style="left:108.75px;top:509.7px;"><span style="color:#7c7c7c">801A</span></div>
<div class="m" style="left:222.5px;top:509.7px;"><span style="color:#3f9a9a">mov.b</span></div>
<div class="m" style="left:266.25px;top:509.7px;"><span style="color:#3f9a9a">r0,@(0x0A,r1)</span></div>
<div class="m" style="left:61.0px;top:524.7px;"><span style="color:#2a2a3a">P:FFFF9030</span></div>
<div class="m" style="left:108.75px;top:524.7px;"><span style="color:#7c7c7c">801B</span></div>
<div class="m" style="left:222.5px;top:524.7px;"><span style="color:#3f9a9a">mov.b</span></div>
<div class="m" style="left:266.25px;top:524.7px;"><span style="color:#3f9a9a">r0,@(0x0B,r1)</span></div>
<div style="position:absolute;left:105.6px;top:254px;width:1.3px;height:118px;background:repeating-linear-gradient(#b07030 0px,#b07030 1px,#e8c040 1px,#e8c040 2px)"></div>
<div style="position:absolute;left:105.8px;top:372px;width:1px;height:13px;background:#b05050"></div>
<div style="position:absolute;left:105.8px;top:404.7px;width:1.5px;height:7.5px;background:#a01010"></div>
<div style="position:absolute;left:576px;top:167px;width:562px;height:119px;background:linear-gradient(#c3d0df 0px,#ccd9e8 10px,#d8e4f2 19px,#dbe6f3 30px,#dce7f4 100%);border:1px solid #858b92;border-top-color:#7b838c;border-radius:5px 5px 1px 1px;box-shadow:inset 0 0 0 1px rgba(255,255,255,0.25),1px 1px 0 rgba(0,0,0,0.10)"></div>
<div style="position:absolute;left:582.8px;top:173.6px;width:10px;height:10px"><svg width="10" height="10" style="display:block"><polygon points="5,0.3 9.6,2.5 9.6,7.5 5,9.7 0.4,7.5 0.4,2.5" fill="#c81818"/><polygon points="5,0.3 9.6,2.5 5,4.6 0.4,2.5" fill="#f05050"/><polygon points="5,4.6 9.6,2.5 9.6,7.5 5,9.7" fill="#8c0c0c"/><rect x="3.3" y="4.8" width="2.8" height="2.2" fill="#fff" opacity="0.8"/></svg></div>
<div class="s" style="left:595.2px;top:174.7px;font-size:8.7px;transform:scaleX(0.8);transform-origin:0 0;color:#b0aeb8">B::Break.List</div>
<div style="position:absolute;left:1069.3px;top:173.2px;width:19.700000000000003px;height:11.2px;background:linear-gradient(#dde7f2 0%,#d5e0ee 50%,#cfdcec 55%,#d8e3f0 100%);border:1px solid #a9b7c9;border-radius:2px"></div>
<svg style="position:absolute;left:1074.9499999999998px;top:177.89999999999998px" width="8.5" height="4.5"><rect x="0.6" y="0.6" width="7.2" height="3.2" rx="1.4" fill="#f4f6f8" stroke="#5a6472" stroke-width="1"/></svg>
<div style="position:absolute;left:1091px;top:173.2px;width:19px;height:11.2px;background:linear-gradient(#dde7f2 0%,#d5e0ee 50%,#cfdcec 55%,#d8e3f0 100%);border:1px solid #a9b7c9;border-radius:2px"></div>
<svg style="position:absolute;left:1096.5px;top:175.6px" width="8" height="6.5"><rect x="0.6" y="0.6" width="6.8" height="5.2" rx="0.8" fill="#f4f6f8" stroke="#5a6472" stroke-width="1"/><rect x="2" y="2" width="4" height="1.8" fill="#6a7482"/></svg>
<div style="position:absolute;left:1112px;top:173.2px;width:20px;height:11.2px;background:linear-gradient(#dde7f2 0%,#d5e0ee 50%,#cfdcec 55%,#d8e3f0 100%);border:1px solid #a9b7c9;border-radius:2px"></div>
<svg style="position:absolute;left:1118.0px;top:175.2px" width="8" height="7"><path d="M1.2,1L6.8,6M6.8,1L1.2,6" stroke="#5d6672" stroke-width="2.9" stroke-linecap="square"/><path d="M1.2,1L6.8,6M6.8,1L1.2,6" stroke="#fff" stroke-width="1.3" stroke-linecap="square"/></svg>
<div style="position:absolute;left:582px;top:186px;width:550px;height:95px;background:#f0f0f0;border-left:1px solid #8a8a8a;border-top:1px solid #8a8a8a"></div>
<div style="position:absolute;left:583.6px;top:188.9px;width:44.60000000000002px;height:11.299999999999983px;background:#e4e4e4;border:1px solid #d2d2d2;border-bottom-color:#bcbcbc;border-right-color:#c8c8c8"></div>
<svg style="position:absolute;left:587px;top:190px" width="10" height="10"><path d="M1.5,8.5L5.5,4.5" stroke="#222" stroke-width="2.6" stroke-linecap="round"/><path d="M1.5,8.5L5.5,4.5" stroke="#fff" stroke-width="1.2" stroke-linecap="round"/><circle cx="6.8" cy="3.2" r="2.6" fill="#fff" stroke="#222" stroke-width="1"/><rect x="6.5" y="0" width="3" height="3" fill="#e4e4e4" transform="rotate(45 8 1.5)"/></svg>
<div class="s" style="left:597.5px;top:190.8px;font-size:8.2px;transform:scaleX(0.87);transform-origin:0 0;color:#1a1a2a;-webkit-text-stroke:0.1px #1a1a2a">Setup...</div>
<div style="position:absolute;left:631px;top:188.9px;width:56.200000000000045px;height:11.299999999999983px;background:#e4e4e4;border:1px solid #d2d2d2;border-bottom-color:#bcbcbc;border-right-color:#c8c8c8"></div>
<svg style="position:absolute;left:637.5px;top:190.5px" width="10" height="9"><path d="M1,1L9,8M9,1L1,8" stroke="#111" stroke-width="1.8"/><path d="M3,1L9,6" stroke="#111" stroke-width="1"/></svg>
<div class="s" style="left:649.5px;top:190.8px;font-size:8.2px;transform:scaleX(0.87);transform-origin:0 0;color:#1a1a2a;-webkit-text-stroke:0.1px #1a1a2a">Delete All</div>
<div style="position:absolute;left:689.3px;top:188.9px;width:55.90000000000009px;height:11.299999999999983px;background:#e4e4e4;border:1px solid #d2d2d2;border-bottom-color:#bcbcbc;border-right-color:#c8c8c8"></div>
<svg style="position:absolute;left:695.5px;top:189.8px" width="9" height="9"><circle cx="4.5" cy="4.5" r="3.6" fill="#fff" stroke="#111" stroke-width="1.1"/></svg>
<div class="s" style="left:707px;top:190.8px;font-size:8.2px;transform:scaleX(0.87);transform-origin:0 0;color:#1a1a2a;-webkit-text-stroke:0.1px #1a1a2a">Disable All</div>
<div style="position:absolute;left:747.5px;top:188.9px;width:56.700000000000045px;height:11.299999999999983px;background:#e4e4e4;border:1px solid #d2d2d2;border-bottom-color:#bcbcbc;border-right-color:#c8c8c8"></div>
<svg style="position:absolute;left:753.5px;top:189.8px" width="9" height="9"><circle cx="4.5" cy="4.5" r="3.6" fill="#fff" stroke="#111" stroke-width="1.1"/><circle cx="4.5" cy="4.5" r="2" fill="#111"/></svg>
<div class="s" style="left:764.6px;top:190.8px;font-size:8.2px;transform:scaleX(0.87);transform-origin:0 0;color:#1a1a2a;-webkit-text-stroke:0.1px #1a1a2a">Enable All</div>
<div style="position:absolute;left:806.3px;top:188.9px;width:43.700000000000045px;height:11.299999999999983px;background:#e4e4e4;border:1px solid #d2d2d2;border-bottom-color:#bcbcbc;border-right-color:#c8c8c8"></div>
<svg style="position:absolute;left:817px;top:189.8px" width="9" height="9"><circle cx="4.5" cy="4.5" r="3.6" fill="#fff" stroke="#111" stroke-width="1.1"/><path d="M3,3L6,6M6,3L3,6" stroke="#111" stroke-width="1"/></svg>
<div class="s" style="left:828.3px;top:190.8px;font-size:8.2px;transform:scaleX(0.87);transform-origin:0 0;color:#1a1a2a;-webkit-text-stroke:0.1px #1a1a2a">Init</div>
<div style="position:absolute;left:852px;top:188.9px;width:44.700000000000045px;height:11.299999999999983px;background:#e4e4e4;border:1px solid #d2d2d2;border-bottom-color:#bcbcbc;border-right-color:#c8c8c8"></div>
<svg style="position:absolute;left:857.5px;top:190px" width="10" height="10"><ellipse cx="5" cy="2.5" rx="3.8" ry="2" fill="#e8e8e8" stroke="#333" stroke-width="0.9"/><rect x="4.3" y="4" width="1.4" height="3" fill="#333"/><polygon points="0.5,9.5 2,7 8,7 9.5,9.5" fill="#3aa838"/></svg>
<div class="s" style="left:869.6px;top:190.8px;font-size:8.2px;transform:scaleX(0.87);transform-origin:0 0;color:#1a1a2a;-webkit-text-stroke:0.1px #1a1a2a">Store...</div>
<div style="position:absolute;left:899.2px;top:188.9px;width:46.0px;height:11.299999999999983px;background:#e4e4e4;border:1px solid #d2d2d2;border-bottom-color:#bcbcbc;border-right-color:#c8c8c8"></div>
<svg style="position:absolute;left:904.5px;top:190px" width="10" height="10"><ellipse cx="5" cy="2.5" rx="3.8" ry="2" fill="#e8e8e8" stroke="#333" stroke-width="0.9"/><rect x="4.3" y="4" width="1.4" height="3" fill="#333"/><polygon points="0.5,9.5 2,7 8,7 9.5,9.5" fill="#3aa838"/></svg>
<div class="s" style="left:916.5px;top:190.8px;font-size:8.2px;transform:scaleX(0.87);transform-origin:0 0;color:#1a1a2a;-webkit-text-stroke:0.1px #1a1a2a">Load...</div>
<div style="position:absolute;left:946.7px;top:188.9px;width:44.59999999999991px;height:11.299999999999983px;background:#e4e4e4;border:1px solid #d2d2d2;border-bottom-color:#bcbcbc;border-right-color:#c8c8c8"></div>
<div style="position:absolute;left:955px;top:190px;width:10px;height:10px"><svg width="10" height="10" style="display:block"><polygon points="5,0.3 9.6,2.5 9.6,7.5 5,9.7 0.4,7.5 0.4,2.5" fill="#c81818"/><polygon points="5,0.3 9.6,2.5 5,4.6 0.4,2.5" fill="#f05050"/><polygon points="5,4.6 9.6,2.5 9.6,7.5 5,9.7" fill="#8c0c0c"/><rect x="3.3" y="4.8" width="2.8" height="2.2" fill="#fff" opacity="0.8"/></svg></div>
<div class="s" style="left:967.3px;top:190.8px;font-size:8.2px;transform:scaleX(0.87);transform-origin:0 0;color:#1a1a2a;-webkit-text-stroke:0.1px #1a1a2a">Set...</div>
<div style="position:absolute;left:583px;top:201.0px;width:549px;height:8px;background:#f0f0f0;border-bottom:1px solid #9c9c9c"></div>
<div style="position:absolute;left:682px;top:201.0px;width:1px;height:7.5px;background:#c8c8c8"></div>
<div style="position:absolute;left:739px;top:201.0px;width:1px;height:7.5px;background:#c8c8c8"></div>
<div style="position:absolute;left:778px;top:201.0px;width:1px;height:7.5px;background:#c8c8c8"></div>
<div style="position:absolute;left:848px;top:201.0px;width:1px;height:7.5px;background:#c8c8c8"></div>
<div style="position:absolute;left:874px;top:201.0px;width:1px;height:7.5px;background:#c8c8c8"></div>
<div style="position:absolute;left:975px;top:201.0px;width:1px;height:7.5px;background:#c8c8c8"></div>
<div class="m" style="left:618px;top:201.6px;"><span style="color:#2e2e44">address</span></div>
<div class="m" style="left:683.5px;top:201.6px;"><span style="color:#2e2e44">type</span></div>
<div class="m" style="left:740px;top:201.6px;"><span style="color:#2e2e44">method</span></div>
<div class="m" style="left:779.5px;top:201.6px;"><span style="color:#2e2e44">options</span></div>
<div class="m" style="left:875.5px;top:201.6px;"><span style="color:#2e2e44">modified address</span></div>
<div style="position:absolute;left:1121px;top:202.5px;width:10.5px;height:6.5px;background:#f4f4f4;border:1px solid #b0b0b0;border-top:none;border-left-color:#d0d0d0"></div>
<div style="position:absolute;left:583px;top:209.2px;width:99px;height:61.10000000000002px;background:#f0f0f0"></div>
<div style="position:absolute;left:682.5px;top:209.2px;width:438.5px;height:61.10000000000002px;background:#fff"></div>
<div style="position:absolute;left:682.5px;top:209.2px;width:438.5px;height:7.5px;background:#fcfc9e"></div>
<div style="position:absolute;left:682px;top:209.2px;width:1px;height:61.10000000000002px;background:#777"></div>
<div style="position:absolute;left:739px;top:209.2px;width:1px;height:61.10000000000002px;background:#c4c4c4"></div>
<div style="position:absolute;left:778px;top:209.2px;width:1px;height:61.10000000000002px;background:#a4a4a4"></div>
<div style="position:absolute;left:848px;top:209.2px;width:1px;height:61.10000000000002px;background:#a8a8a8"></div>
<div style="position:absolute;left:874px;top:209.2px;width:1px;height:61.10000000000002px;background:#a8a8a8"></div>
<div style="position:absolute;left:975px;top:209.2px;width:1px;height:61.10000000000002px;background:#a8a8a8"></div>
<div style="position:absolute;left:1121px;top:209.2px;width:11px;height:61.10000000000002px;background:#f0f0f0"></div>
<svg style="position:absolute;left:1123.5px;top:213px" width="7" height="5"><path d="M1,4L3.5,1.5L6,4" stroke="#b0b0b0" stroke-width="1.1" fill="none"/></svg>
<svg style="position:absolute;left:1123.5px;top:262px" width="7" height="5"><path d="M1,1L3.5,3.5L6,1" stroke="#a0a0a0" stroke-width="1.1" fill="none"/></svg>
<div style="position:absolute;left:583px;top:270.3px;width:549px;height:10.5px;background:#f0f0f0"></div>
<div style="position:absolute;left:583px;top:270.0px;width:99px;height:1px;background:#8c8c8c"></div>
<div style="position:absolute;left:681px;top:270.3px;width:1px;height:10px;background:#8c8c8c"></div>
<svg style="position:absolute;left:687px;top:272px" width="5" height="7"><path d="M4,1L1.5,3.5L4,6" stroke="#b0b0b0" stroke-width="1.1" fill="none"/></svg>
<svg style="position:absolute;left:1113px;top:272px" width="5" height="7"><path d="M1,1L3.5,3.5L1,6" stroke="#a0a0a0" stroke-width="1.1" fill="none"/></svg>
<svg style="position:absolute;left:1123px;top:272.5px" width="8" height="8"><g fill="#b8b8b8"><rect x="6" y="2" width="1" height="1"/><rect x="4" y="4" width="1" height="1"/><rect x="6" y="4" width="1" height="1"/><rect x="2" y="6" width="1" height="1"/><rect x="4" y="6" width="1" height="1"/><rect x="6" y="6" width="1" height="1"/></g></svg>
<div class="m" style="left:591.3px;top:209.29999999999998px;"><span style="color:#3a3a48">P:FFFF9012--FFFF9014</span></div>
<div class="m" style="left:635.05px;top:216.79999999999998px;"><span style="color:#3a3a48">P:FFFF901E</span></div>
<div style="position:absolute;left:680px;top:209.29999999999998px;width:1.2px;height:15px;background:#d08080"></div>
<div class="m" style="left:683.5px;top:209.29999999999998px;font-weight:bold"><span style="color:#000">Program</span></div>
<div class="m" style="left:740.2px;top:209.29999999999998px;font-weight:bold"><span style="color:#000">ONCHIP-I</span></div>
<div class="m" style="left:683.5px;top:216.79999999999998px;"><span style="color:#3c3a58">Program</span></div>
<div class="m" style="left:740.2px;top:216.79999999999998px;"><span style="color:#3c3a58">SOFT</span></div>
<div class="m" style="left:883.3px;top:209.29999999999998px;font-weight:bold"><span style="color:#000">P:FFFF9010--FFFF9017</span></div>
<div class="m" style="left:980.8px;top:209.29999999999998px;font-weight:bold"><span style="color:#000">(main\16+0x4)--(main\16+0x6)</span></div>
<div class="m" style="left:980.8px;top:216.79999999999998px;"><span style="color:#3c3a58">main+0x1E</span></div>
<svg style="position:absolute;left:853px;top:211px" width="6" height="6"><path d="M0.8,3.2L2.3,5L5.2,0.8" stroke="#111" stroke-width="1.1" fill="none"/></svg>
<svg style="position:absolute;left:853px;top:218.5px" width="6" height="6"><path d="M0.8,3.2L2.3,5L5.2,0.8" stroke="#888" stroke-width="0.9" fill="none"/></svg>
<svg style="position:absolute;left:862.5px;top:209.8px" width="8.5" height="7.5"><rect x="0.5" y="0.5" width="7.5" height="6.5" fill="#eaeaea" stroke="#b8b8b8" stroke-width="0.8"/><path d="M2,6L6.8,1.2" stroke="#555" stroke-width="1.1"/></svg>
<svg style="position:absolute;left:862.5px;top:217.3px" width="8.5" height="7.5"><rect x="0.5" y="0.5" width="7.5" height="6.5" fill="#eaeaea" stroke="#b8b8b8" stroke-width="0.8"/><path d="M2,6L6.8,1.2" stroke="#555" stroke-width="1.1"/></svg>
<div style="position:absolute;left:577px;top:317px;width:260px;height:241px;background:linear-gradient(#c3d0df 0px,#ccd9e8 10px,#d8e4f2 19px,#dbe6f3 30px,#dce7f4 100%);border:1px solid #858b92;border-top-color:#7b838c;border-radius:5px 5px 1px 1px;box-shadow:inset 0 0 0 1px rgba(255,255,255,0.25),1px 1px 0 rgba(0,0,0,0.10)"></div>
<div style="position:absolute;left:583.8px;top:323.6px;width:10px;height:10px"><svg width="10" height="10" style="display:block"><rect x="0.5" y="0.5" width="9" height="9" rx="1" fill="#6a6a6a"/><rect x="1.5" y="1.5" width="7" height="7" fill="#8a8a8a"/></svg></div>
<div class="s" style="left:596.2px;top:324.7px;font-size:8.7px;transform:scaleX(0.8);transform-origin:0 0;color:#b0aeb8">B::Register</div>
<div style="position:absolute;left:768.3px;top:323.2px;width:19.700000000000003px;height:11.2px;background:linear-gradient(#dde7f2 0%,#d5e0ee 50%,#cfdcec 55%,#d8e3f0 100%);border:1px solid #a9b7c9;border-radius:2px"></div>
<svg style="position:absolute;left:773.9499999999999px;top:327.90000000000003px" width="8.5" height="4.5"><rect x="0.6" y="0.6" width="7.2" height="3.2" rx="1.4" fill="#f4f6f8" stroke="#5a6472" stroke-width="1"/></svg>
<div style="position:absolute;left:790px;top:323.2px;width:19px;height:11.2px;background:linear-gradient(#dde7f2 0%,#d5e0ee 50%,#cfdcec 55%,#d8e3f0 100%);border:1px solid #a9b7c9;border-radius:2px"></div>
<svg style="position:absolute;left:795.5px;top:325.6px" width="8" height="6.5"><rect x="0.6" y="0.6" width="6.8" height="5.2" rx="0.8" fill="#f4f6f8" stroke="#5a6472" stroke-width="1"/><rect x="2" y="2" width="4" height="1.8" fill="#6a7482"/></svg>
<div style="position:absolute;left:811px;top:323.2px;width:20px;height:11.2px;background:linear-gradient(#dde7f2 0%,#d5e0ee 50%,#cfdcec 55%,#d8e3f0 100%);border:1px solid #a9b7c9;border-radius:2px"></div>
<svg style="position:absolute;left:817.0px;top:325.2px" width="8" height="7"><path d="M1.2,1L6.8,6M6.8,1L1.2,6" stroke="#5d6672" stroke-width="2.9" stroke-linecap="square"/><path d="M1.2,1L6.8,6M6.8,1L1.2,6" stroke="#fff" stroke-width="1.3" stroke-linecap="square"/></svg>
<div style="position:absolute;left:583px;top:337px;width:248px;height:215px;background:#fff;border-left:1px solid #8a8a8a;border-top:1px solid #8a8a8a"></div>
<div style="position:absolute;left:821.5px;top:337.5px;width:9.6px;height:204px;background:#f0f0f0"></div>
<svg style="position:absolute;left:822.5px;top:341px" width="7" height="5"><path d="M1,4L3.5,1.5L6,4" stroke="#b0b0b0" stroke-width="1.1" fill="none"/></svg>
<div style="position:absolute;left:583.5px;top:541.5px;width:247.5px;height:10.5px;background:#f0f0f0"></div>
<svg style="position:absolute;left:588px;top:547px" width="5" height="7"><path d="M4,1L1.5,3.5L4,6" stroke="#b0b0b0" stroke-width="1.1" fill="none"/></svg>
<div class="m" style="left:583.8px;top:338.5px;"><span style="color:#8c8c8c">T</span></div>
<div class="m" style="left:601.5px;top:338.5px;"><span style="color:#1e1e1e">_</span></div>
<div class="m" style="left:583.8px;top:346.0px;"><span style="color:#8c8c8c">S</span></div>
<div class="m" style="left:601.5px;top:346.0px;"><span style="color:#1e1e1e">_</span></div>
<div class="m" style="left:583.8px;top:353.5px;"><span style="color:#8c8c8c">I</span></div>
<div class="m" style="left:601.5px;top:353.5px;"><span style="color:#1e1e1e">E</span></div>
<div class="m" style="left:583.8px;top:361.0px;"><span style="color:#8c8c8c">Q</span></div>
<div class="m" style="left:601.5px;top:361.0px;"><span style="color:#1e1e1e">_</span></div>
<div class="m" style="left:583.8px;top:368.5px;"><span style="color:#8c8c8c">M</span></div>
<div class="m" style="left:601.5px;top:368.5px;"><span style="color:#1e1e1e">_</span></div>
<div class="m" style="left:614.5px;top:338.5px;"><span style="color:#8c8c8c">R0</span></div>
<div class="m" style="left:663.05px;top:338.5px;-webkit-text-stroke:0.05px #222"><span style="color:#1e1e1e">80</span></div>
<div class="m" style="left:614.5px;top:346.0px;"><span style="color:#8c8c8c">R1</span></div>
<div class="m" style="left:636.8px;top:346.0px;-webkit-text-stroke:0.05px #222"><span style="color:#1e1e1e">FFFFFF80</span></div>
<div class="m" style="left:614.5px;top:353.5px;"><span style="color:#8c8c8c">R2</span></div>
<div class="m" style="left:636.8px;top:353.5px;-webkit-text-stroke:0.05px #222"><span style="color:#1e1e1e">FFFFF738</span></div>
<div class="m" style="left:614.5px;top:361.0px;"><span style="color:#8c8c8c">R3</span></div>
<div class="m" style="left:636.8px;top:361.0px;-webkit-text-stroke:0.05px #222"><span style="color:#1e1e1e">FFFFE410</span></div>
<div class="m" style="left:614.5px;top:368.5px;"><span style="color:#8c8c8c">R4</span></div>
<div class="m" style="left:667.425px;top:368.5px;-webkit-text-stroke:0.05px #222"><span style="color:#1e1e1e">0</span></div>
<div class="m" style="left:614.5px;top:376.0px;"><span style="color:#8c8c8c">R5</span></div>
<div class="m" style="left:667.425px;top:376.0px;-webkit-text-stroke:0.05px #222"><span style="color:#1e1e1e">0</span></div>
<div class="m" style="left:614.5px;top:383.5px;"><span style="color:#8c8c8c">R6</span></div>
<div class="m" style="left:667.425px;top:383.5px;-webkit-text-stroke:0.05px #222"><span style="color:#1e1e1e">0</span></div>
<div class="m" style="left:614.5px;top:391.0px;"><span style="color:#8c8c8c">R7</span></div>
<div class="m" style="left:654.3px;top:391.0px;-webkit-text-stroke:0.05px #222"><span style="color:#1e1e1e">3EF5</span></div>
<div class="m" style="left:614.5px;top:398.5px;"><span style="color:#8c8c8c">GBR</span></div>
<div class="m" style="left:667.425px;top:398.5px;-webkit-text-stroke:0.05px #222"><span style="color:#1e1e1e">0</span></div>
<div class="m" style="left:614.5px;top:406.0px;"><span style="color:#8c8c8c">VBR</span></div>
<div class="m" style="left:636.8px;top:406.0px;-webkit-text-stroke:0.05px #222"><span style="color:#1e1e1e">FFFFA000</span></div>
<div class="m" style="left:614.5px;top:413.5px;"><span style="color:#8c8c8c">MACH</span></div>
<div class="m" style="left:667.425px;top:413.5px;-webkit-text-stroke:0.05px #222"><span style="color:#1e1e1e">0</span></div>
<div class="m" style="left:614.5px;top:421.0px;"><span style="color:#8c8c8c">MACL</span></div>
<div class="m" style="left:667.425px;top:421.0px;-webkit-text-stroke:0.05px #222"><span style="color:#1e1e1e">0</span></div>
<div class="m" style="left:679.8px;top:338.5px;"><span style="color:#8c8c8c">R8</span></div>
<div class="m" style="left:732.825px;top:338.5px;-webkit-text-stroke:0.05px #222"><span style="color:#1e1e1e">0</span></div>
<div class="m" style="left:679.8px;top:346.0px;"><span style="color:#8c8c8c">R9</span></div>
<div class="m" style="left:732.825px;top:346.0px;-webkit-text-stroke:0.05px #222"><span style="color:#1e1e1e">0</span></div>
<div class="m" style="left:679.8px;top:353.5px;"><span style="color:#8c8c8c">R10</span></div>
<div class="m" style="left:732.825px;top:353.5px;-webkit-text-stroke:0.05px #222"><span style="color:#1e1e1e">0</span></div>
<div class="m" style="left:679.8px;top:361.0px;"><span style="color:#8c8c8c">R11</span></div>
<div class="m" style="left:732.825px;top:361.0px;-webkit-text-stroke:0.05px #222"><span style="color:#1e1e1e">0</span></div>
<div class="m" style="left:679.8px;top:368.5px;"><span style="color:#8c8c8c">R12</span></div>
<div class="m" style="left:732.825px;top:368.5px;-webkit-text-stroke:0.05px #222"><span style="color:#1e1e1e">0</span></div>
<div class="m" style="left:679.8px;top:376.0px;"><span style="color:#8c8c8c">R13</span></div>
<div class="m" style="left:732.825px;top:376.0px;-webkit-text-stroke:0.05px #222"><span style="color:#1e1e1e">0</span></div>
<div class="m" style="left:679.8px;top:383.5px;"><span style="color:#8c8c8c">R14</span></div>
<div class="m" style="left:732.825px;top:383.5px;-webkit-text-stroke:0.05px #222"><span style="color:#1e1e1e">0</span></div>
<div class="m" style="left:679.8px;top:391.0px;"><span style="color:#8c8c8c">R15</span></div>
<div class="m" style="left:702.2px;top:391.0px;-webkit-text-stroke:0.05px #222"><span style="color:#1e1e1e">FFFF9FD8</span></div>
<div class="m" style="left:679.8px;top:398.5px;"><span style="color:#8c8c8c">PC</span></div>
<div class="m" style="left:702.2px;top:398.5px;-webkit-text-stroke:0.05px #222"><span style="color:#1e1e1e">FFFF9012</span></div>
<div class="m" style="left:679.8px;top:406.0px;"><span style="color:#8c8c8c">PR</span></div>
<div class="m" style="left:702.2px;top:406.0px;-webkit-text-stroke:0.05px #222"><span style="color:#1e1e1e">FFFF900E</span></div>
<div class="m" style="left:679.8px;top:413.5px;"><span style="color:#8c8c8c">SR</span></div>
<div class="m" style="left:728.45px;top:413.5px;-webkit-text-stroke:0.05px #222"><span style="color:#1e1e1e">E0</span></div>
<div style="position:absolute;left:745.4px;top:337.9px;width:12.8px;height:7.8px;background:#e6e6e6;border:1px solid #c0c0c0;border-bottom-color:#8a8a8a;border-right-color:#8a8a8a"></div>
<div class="m" style="left:749.5px;top:338.7px;"><span style="color:#1e1e1e">S</span></div>
<div style="position:absolute;left:762.6px;top:337.9px;width:34.9px;height:7.8px;background:#e6e6e6;border:1px solid #c0c0c0;border-bottom-color:#8a8a8a;border-right-color:#8a8a8a"></div>
<div class="m" style="left:768.8px;top:338.7px;"><span style="color:#1e1e1e">Stack</span></div>
<div style="position:absolute;left:598px;top:432px;width:540px;height:215px;background:linear-gradient(#9fbadb 0px,#adc6e4 10px,#bad0ea 19px,#c0d5ee 30px,#c2d7ef 100%);border:1px solid #3c5a68;border-top-color:#7b838c;border-radius:5px 5px 1px 1px;box-shadow:inset 0 0 0 1px rgba(255,255,255,0.25),1px 1px 0 rgba(0,0,0,0.10)"></div>
<div style="position:absolute;left:604.8px;top:438.6px;width:10px;height:10px"><svg width="11" height="9" style="display:block"><polygon points="0.5,5 6,1.5 10.5,3.5 5,7" fill="#111"/><path d="M1,6.5L5.5,8.5M2.5,4.2L1,5M4,3.2L2.5,4M5.5,2.3L4,3" stroke="#444" stroke-width="0.8"/></svg></div>
<div class="s" style="left:617.2px;top:439.7px;font-size:8.7px;transform:scaleX(0.8);transform-origin:0 0;color:#1a1a1a">B::PER</div>
<div style="position:absolute;left:1069.3px;top:438.2px;width:19.700000000000003px;height:11.2px;background:linear-gradient(#cadcf0 0%,#bcd0e8 45%,#a9c2e0 55%,#bfd4ec 100%);border:1px solid #7d8ea5;border-radius:2px"></div>
<svg style="position:absolute;left:1074.9499999999998px;top:442.90000000000003px" width="8.5" height="4.5"><rect x="0.6" y="0.6" width="7.2" height="3.2" rx="1.4" fill="#f4f6f8" stroke="#5a6472" stroke-width="1"/></svg>
<div style="position:absolute;left:1091px;top:438.2px;width:19px;height:11.2px;background:linear-gradient(#cadcf0 0%,#bcd0e8 45%,#a9c2e0 55%,#bfd4ec 100%);border:1px solid #7d8ea5;border-radius:2px"></div>
<svg style="position:absolute;left:1096.5px;top:440.6px" width="8" height="6.5"><rect x="0.6" y="0.6" width="6.8" height="5.2" rx="0.8" fill="#f4f6f8" stroke="#5a6472" stroke-width="1"/><rect x="2" y="2" width="4" height="1.8" fill="#6a7482"/></svg>
<div style="position:absolute;left:1112px;top:438.2px;width:20px;height:11.2px;background:linear-gradient(#e8a090 0%,#d9826e 45%,#c2452a 55%,#d06a50 100%);border:1px solid #7a3a30;border-radius:2px"></div>
<svg style="position:absolute;left:1118.0px;top:440.2px" width="8" height="7"><path d="M1.2,1L6.8,6M6.8,1L1.2,6" stroke="#5a3030" stroke-width="2.9" stroke-linecap="square"/><path d="M1.2,1L6.8,6M6.8,1L1.2,6" stroke="#fff" stroke-width="1.3" stroke-linecap="square"/></svg>
<div style="position:absolute;left:604px;top:452px;width:528px;height:189px;background:#fff;border-left:1px solid #858585;border-top:1px solid #858585"></div>
<div style="position:absolute;left:1121.8px;top:452.5px;width:10px;height:188.5px;background:#f0f0f0"></div>
<div style="position:absolute;left:1122.4px;top:464px;width:8.8px;height:63px;background:#cdcdcd"></div>
<svg style="position:absolute;left:1123.5px;top:456.5px" width="7" height="5"><path d="M1,4L3.5,1.5L6,4" stroke="#505050" stroke-width="1.2" fill="none"/></svg>
<svg style="position:absolute;left:1123.5px;top:633.5px" width="7" height="5"><path d="M1,1L3.5,3.5L6,1" stroke="#505050" stroke-width="1.2" fill="none"/></svg>
<div style="position:absolute;left:605.5px;top:462.1px;width:5.2px;height:5.2px;border:1px solid #7a7a7a;background:#fff"></div>
<div style="position:absolute;left:606.6px;top:464.2px;width:3px;height:1px;background:#222"></div>
<div style="position:absolute;left:607.6px;top:463.2px;width:1px;height:3px;background:#222"></div>
<div class="m" style="left:614.1px;top:460.5px;"><span style="color:#8a8a8a">System Control</span></div>
<div style="position:absolute;left:614px;top:466.9px;width:507.8px;height:1.3px;background:#7a7a7a"></div>
<div style="position:absolute;left:605.5px;top:477.1px;width:5.2px;height:5.2px;border:1px solid #7a7a7a;background:#fff"></div>
<div style="position:absolute;left:606.6px;top:479.2px;width:3px;height:1px;background:#222"></div>
<div style="position:absolute;left:607.6px;top:478.2px;width:1px;height:3px;background:#222"></div>
<div class="m" style="left:614.1px;top:475.5px;"><span style="color:#8a8a8a">Power-Down Control</span></div>
<div style="position:absolute;left:614px;top:481.9px;width:507.8px;height:1.3px;background:#7a7a7a"></div>
<div style="position:absolute;left:605.5px;top:492.1px;width:5.2px;height:5.2px;border:1px solid #7a7a7a;background:#fff"></div>
<div style="position:absolute;left:606.6px;top:494.2px;width:3px;height:1px;background:#222"></div>
<div class="m" style="left:614.1px;top:490.5px;"><span style="color:#8a8a8a">Interrupt Controller (INTC)</span></div>
<div style="position:absolute;left:614px;top:496.9px;width:507.8px;height:1.3px;background:#7a7a7a"></div>
<div class="m" style="left:614.1px;top:498.0px;"><span style="color:#8a8a8a">ICR</span></div>
<div class="m" style="left:644.725px;top:498.0px;-webkit-text-stroke:0.05px #222"><span style="color:#222">8080</span></div>
<div class="m" style="left:666.6px;top:498.0px;"><span style="color:#8a8a8a">NMIL</span></div>
<div class="m" style="left:688.475px;top:498.0px;-webkit-text-stroke:0.05px #222"><span style="color:#222">high</span></div>
<div class="m" style="left:1003.475px;top:498.0px;"><span style="color:#8a8a8a">NMIE</span></div>
<div class="m" style="left:1025.35px;top:498.0px;-webkit-text-stroke:0.05px #222"><span style="color:#222">fal</span></div>
<div class="m" style="left:666.6px;top:505.5px;"><span style="color:#8a8a8a">IRQ0S</span></div>
<div class="m" style="left:692.85px;top:505.5px;-webkit-text-stroke:0.05px #222"><span style="color:#222">edg</span></div>
<div class="m" style="left:714.725px;top:505.5px;"><span style="color:#8a8a8a">IRQ1S</span></div>
<div class="m" style="left:740.975px;top:505.5px;-webkit-text-stroke:0.05px #222"><span style="color:#222">lev</span></div>
<div class="m" style="left:762.85px;top:505.5px;"><span style="color:#8a8a8a">IRQ2S</span></div>
<div class="m" style="left:789.1px;top:505.5px;-webkit-text-stroke:0.05px #222"><span style="color:#222">lev</span></div>
<div class="m" style="left:810.975px;top:505.5px;"><span style="color:#8a8a8a">IRQ3S</span></div>
<div class="m" style="left:837.225px;top:505.5px;-webkit-text-stroke:0.05px #222"><span style="color:#222">lev</span></div>
<div class="m" style="left:859.1px;top:505.5px;"><span style="color:#8a8a8a">IRQ4S</span></div>
<div class="m" style="left:885.35px;top:505.5px;-webkit-text-stroke:0.05px #222"><span style="color:#222">lev</span></div>
<div class="m" style="left:907.225px;top:505.5px;"><span style="color:#8a8a8a">IRQ5S</span></div>
<div class="m" style="left:933.475px;top:505.5px;-webkit-text-stroke:0.05px #222"><span style="color:#222">lev</span></div>
<div class="m" style="left:955.35px;top:505.5px;"><span style="color:#8a8a8a">IRQ6S</span></div>
<div class="m" style="left:981.6px;top:505.5px;-webkit-text-stroke:0.05px #222"><span style="color:#222">lev</span></div>
<div class="m" style="left:1003.475px;top:505.5px;"><span style="color:#8a8a8a">IRQ7S</span></div>
<div class="m" style="left:1029.725px;top:505.5px;-webkit-text-stroke:0.05px #222"><span style="color:#222">lev</span></div>
<div class="m" style="left:614.1px;top:513.0px;"><span style="color:#8a8a8a">ISR</span></div>
<div class="m" style="left:644.725px;top:513.0px;-webkit-text-stroke:0.05px #222"><span style="color:#222">0000</span></div>
<div class="m" style="left:666.6px;top:520.5px;"><span style="color:#8a8a8a">IRQ0F</span></div>
<div class="m" style="left:692.85px;top:520.5px;-webkit-text-stroke:0.05px #222"><span style="color:#222">0</span></div>
<div class="m" style="left:714.725px;top:520.5px;"><span style="color:#8a8a8a">IRQ1F</span></div>
<div class="m" style="left:740.975px;top:520.5px;-webkit-text-stroke:0.05px #222"><span style="color:#222">0</span></div>
<div class="m" style="left:762.85px;top:520.5px;"><span style="color:#8a8a8a">IRQ2F</span></div>
<div class="m" style="left:789.1px;top:520.5px;-webkit-text-stroke:0.05px #222"><span style="color:#222">0</span></div>
<div class="m" style="left:810.975px;top:520.5px;"><span style="color:#8a8a8a">IRQ3F</span></div>
<div class="m" style="left:837.225px;top:520.5px;-webkit-text-stroke:0.05px #222"><span style="color:#222">0</span></div>
<div class="m" style="left:859.1px;top:520.5px;"><span style="color:#8a8a8a">IRQ4F</span></div>
<div class="m" style="left:885.35px;top:520.5px;-webkit-text-stroke:0.05px #222"><span style="color:#222">0</span></div>
<div class="m" style="left:907.225px;top:520.5px;"><span style="color:#8a8a8a">IRQ5F</span></div>
<div class="m" style="left:933.475px;top:520.5px;-webkit-text-stroke:0.05px #222"><span style="color:#222">0</span></div>
<div class="m" style="left:955.35px;top:520.5px;"><span style="color:#8a8a8a">IRQ6F</span></div>
<div class="m" style="left:981.6px;top:520.5px;-webkit-text-stroke:0.05px #222"><span style="color:#222">0</span></div>
<div class="m" style="left:1003.475px;top:520.5px;"><span style="color:#8a8a8a">IRQ7F</span></div>
<div class="m" style="left:1029.725px;top:520.5px;-webkit-text-stroke:0.05px #222"><span style="color:#222">0</span></div>
<div class="m" style="left:614.1px;top:528.0px;"><span style="color:#8a8a8a">IPRA</span></div>
<div class="m" style="left:644.725px;top:528.0px;-webkit-text-stroke:0.05px #222"><span style="color:#222">0000</span></div>
<div class="m" style="left:666.6px;top:528.0px;"><span style="color:#8a8a8a">IRQ0</span></div>
<div class="m" style="left:688.475px;top:528.0px;-webkit-text-stroke:0.05px #222"><span style="color:#222">0</span></div>
<div class="m" style="left:666.6px;top:535.5px;"><span style="color:#8a8a8a">IRQ2</span></div>
<div class="m" style="left:688.475px;top:535.5px;-webkit-text-stroke:0.05px #222"><span style="color:#222">0</span></div>
<div class="m" style="left:614.1px;top:543.0px;"><span style="color:#8a8a8a">IPRB</span></div>
<div class="m" style="left:644.725px;top:543.0px;-webkit-text-stroke:0.05px #222"><span style="color:#222">0000</span></div>
<div class="m" style="left:666.6px;top:543.0px;"><span style="color:#8a8a8a">IRQ4</span></div>
<div class="m" style="left:688.475px;top:543.0px;-webkit-text-stroke:0.05px #222"><span style="color:#222">0</span></div>
<div class="m" style="left:666.6px;top:550.5px;"><span style="color:#8a8a8a">IRQ6</span></div>
<div class="m" style="left:688.475px;top:550.5px;-webkit-text-stroke:0.05px #222"><span style="color:#222">0</span></div>
<div class="m" style="left:614.1px;top:558.0px;"><span style="color:#8a8a8a">IPRC</span></div>
<div class="m" style="left:644.725px;top:558.0px;-webkit-text-stroke:0.05px #222"><span style="color:#222">090B</span></div>
<div class="m" style="left:666.6px;top:558.0px;"><span style="color:#8a8a8a">DMAC0/1</span></div>
<div class="m" style="left:701.6px;top:558.0px;-webkit-text-stroke:0.05px #222"><span style="color:#222">0</span></div>
<div class="m" style="left:666.6px;top:565.5px;"><span style="color:#8a8a8a">ATU01</span></div>
<div class="m" style="left:692.85px;top:565.5px;-webkit-text-stroke:0.05px #222"><span style="color:#222">0</span></div>
<div class="m" style="left:614.1px;top:573.0px;"><span style="color:#8a8a8a">IPRD</span></div>
<div class="m" style="left:644.725px;top:573.0px;-webkit-text-stroke:0.05px #222"><span style="color:#222">9000</span></div>
<div class="m" style="left:666.6px;top:573.0px;"><span style="color:#8a8a8a">ATU03</span></div>
<div class="m" style="left:692.85px;top:573.0px;-webkit-text-stroke:0.05px #222"><span style="color:#222">9</span></div>
<div class="m" style="left:666.6px;top:580.5px;"><span style="color:#8a8a8a">ATU11</span></div>
<div class="m" style="left:692.85px;top:580.5px;-webkit-text-stroke:0.05px #222"><span style="color:#222">0</span></div>
<div class="m" style="left:614.1px;top:588.0px;"><span style="color:#8a8a8a">IPRE</span></div>
<div class="m" style="left:644.725px;top:588.0px;-webkit-text-stroke:0.05px #222"><span style="color:#222">9000</span></div>
<div class="m" style="left:666.6px;top:588.0px;"><span style="color:#8a8a8a">ATU13</span></div>
<div class="m" style="left:692.85px;top:588.0px;-webkit-text-stroke:0.05px #222"><span style="color:#222">9</span></div>
<div class="m" style="left:666.6px;top:595.5px;"><span style="color:#8a8a8a">ATU22</span></div>
<div class="m" style="left:692.85px;top:595.5px;-webkit-text-stroke:0.05px #222"><span style="color:#222">0</span></div>
<div class="m" style="left:614.1px;top:603.0px;"><span style="color:#8a8a8a">IPRF</span></div>
<div class="m" style="left:644.725px;top:603.0px;-webkit-text-stroke:0.05px #222"><span style="color:#222">9000</span></div>
<div class="m" style="left:666.6px;top:603.0px;"><span style="color:#8a8a8a">ATU31</span></div>
<div class="m" style="left:692.85px;top:603.0px;-webkit-text-stroke:0.05px #222"><span style="color:#222">9</span></div>
<div class="m" style="left:666.6px;top:610.5px;"><span style="color:#8a8a8a">ATU41</span></div>
<div class="m" style="left:692.85px;top:610.5px;-webkit-text-stroke:0.05px #222"><span style="color:#222">0</span></div>
<div class="m" style="left:614.1px;top:618.0px;"><span style="color:#8a8a8a">IPRG</span></div>
<div class="m" style="left:644.725px;top:618.0px;-webkit-text-stroke:0.05px #222"><span style="color:#222">0000</span></div>
<div class="m" style="left:666.6px;top:618.0px;"><span style="color:#8a8a8a">ATU51</span></div>
<div class="m" style="left:692.85px;top:618.0px;-webkit-text-stroke:0.05px #222"><span style="color:#222">0</span></div>
<div class="m" style="left:666.6px;top:625.5px;"><span style="color:#8a8a8a">ATU6</span></div>
<div class="m" style="left:688.475px;top:625.5px;-webkit-text-stroke:0.05px #222"><span style="color:#222">0</span></div>
<div class="m" style="left:614.1px;top:633.0px;"><span style="color:#8a8a8a">IPRH</span></div>
<div class="m" style="left:644.725px;top:633.0px;-webkit-text-stroke:0.05px #222"><span style="color:#222">0009</span></div>
<div class="m" style="left:666.6px;top:633.0px;"><span style="color:#8a8a8a">ATU81</span></div>
<div class="m" style="left:692.85px;top:633.0px;-webkit-text-stroke:0.05px #222"><span style="color:#222">0</span></div>
<div class="m" style="left:859.1px;top:528.0px;"><span style="color:#8a8a8a">IRQ1</span></div>
<div class="m" style="left:880.975px;top:528.0px;-webkit-text-stroke:0.05px #222"><span style="color:#222">0</span></div>
<div class="m" style="left:859.1px;top:535.5px;"><span style="color:#8a8a8a">IRQ3</span></div>
<div class="m" style="left:880.975px;top:535.5px;-webkit-text-stroke:0.05px #222"><span style="color:#222">0</span></div>
<div class="m" style="left:859.1px;top:543.0px;"><span style="color:#8a8a8a">IRQ5</span></div>
<div class="m" style="left:880.975px;top:543.0px;-webkit-text-stroke:0.05px #222"><span style="color:#222">0</span></div>
<div class="m" style="left:859.1px;top:550.5px;"><span style="color:#8a8a8a">IRQ7</span></div>
<div class="m" style="left:880.975px;top:550.5px;-webkit-text-stroke:0.05px #222"><span style="color:#222">0</span></div>
<div class="m" style="left:859.1px;top:558.0px;"><span style="color:#8a8a8a">DMAC2/3</span></div>
<div class="m" style="left:894.1px;top:558.0px;-webkit-text-stroke:0.05px #222"><span style="color:#222">9</span></div>
<div class="m" style="left:859.1px;top:565.5px;"><span style="color:#8a8a8a">ATU02</span></div>
<div class="m" style="left:885.35px;top:565.5px;-webkit-text-stroke:0.05px #222"><span style="color:#222">11</span></div>
<div class="m" style="left:859.1px;top:573.0px;"><span style="color:#8a8a8a">ATU04</span></div>
<div class="m" style="left:885.35px;top:573.0px;-webkit-text-stroke:0.05px #222"><span style="color:#222">0</span></div>
<div class="m" style="left:859.1px;top:580.5px;"><span style="color:#8a8a8a">ATU12</span></div>
<div class="m" style="left:885.35px;top:580.5px;-webkit-text-stroke:0.05px #222"><span style="color:#222">0</span></div>
<div class="m" style="left:859.1px;top:588.0px;"><span style="color:#8a8a8a">ATU21</span></div>
<div class="m" style="left:885.35px;top:588.0px;-webkit-text-stroke:0.05px #222"><span style="color:#222">0</span></div>
<div class="m" style="left:859.1px;top:595.5px;"><span style="color:#8a8a8a">ATU23</span></div>
<div class="m" style="left:885.35px;top:595.5px;-webkit-text-stroke:0.05px #222"><span style="color:#222">0</span></div>
<div class="m" style="left:859.1px;top:603.0px;"><span style="color:#8a8a8a">ATU32</span></div>
<div class="m" style="left:885.35px;top:603.0px;-webkit-text-stroke:0.05px #222"><span style="color:#222">0</span></div>
<div class="m" style="left:859.1px;top:610.5px;"><span style="color:#8a8a8a">ATU42</span></div>
<div class="m" style="left:885.35px;top:610.5px;-webkit-text-stroke:0.05px #222"><span style="color:#222">0</span></div>
<div class="m" style="left:859.1px;top:618.0px;"><span style="color:#8a8a8a">ATU52</span></div>
<div class="m" style="left:885.35px;top:618.0px;-webkit-text-stroke:0.05px #222"><span style="color:#222">0</span></div>
<div class="m" style="left:859.1px;top:625.5px;"><span style="color:#8a8a8a">ATU7</span></div>
<div class="m" style="left:880.975px;top:625.5px;-webkit-text-stroke:0.05px #222"><span style="color:#222">0</span></div>
<div class="m" style="left:859.1px;top:633.0px;"><span style="color:#8a8a8a">ATU82</span></div>
<div class="m" style="left:885.35px;top:633.0px;-webkit-text-stroke:0.05px #222"><span style="color:#222">0</span></div>
<div style="position:absolute;left:3.0px;top:31px;width:1px;height:11px;background:#979797"></div>
<div style="position:absolute;left:53.0px;top:31px;width:1px;height:11px;background:#979797"></div>
<div style="position:absolute;left:103.0px;top:31px;width:1px;height:11px;background:#979797"></div>
<div style="position:absolute;left:138.0px;top:31px;width:1px;height:11px;background:#979797"></div>
<div style="position:absolute;left:158.0px;top:31px;width:1px;height:11px;background:#979797"></div>
<div style="position:absolute;left:193.0px;top:31px;width:1px;height:11px;background:#979797"></div>
<div style="position:absolute;left:213.1px;top:31px;width:1px;height:11px;background:#979797"></div>
<div style="position:absolute;left:262.8px;top:31px;width:1px;height:11px;background:#979797"></div>
<div style="position:absolute;left:312.8px;top:31px;width:1px;height:11px;background:#979797"></div>
<div style="position:absolute;left:362.8px;top:31px;width:1px;height:11px;background:#979797"></div>
<svg style="position:absolute;left:12px;top:31.9px" width="7" height="8"><polygon points="0,0.3 4.4,4 0,7.7" fill="#111"/><rect x="4.5" y="0.3" width="1.9" height="7.4" fill="#111"/></svg>
<svg style="position:absolute;left:26px;top:31.9px" width="8" height="8"><polygon points="0,0.3 5.8,4.2 0,7.7" fill="#111"/><rect x="4.2" y="0" width="1.8" height="1.8" fill="#111"/><rect x="4.2" y="6.2" width="1.8" height="1.8" fill="#111"/></svg>
<svg style="position:absolute;left:40px;top:31.9px" width="10" height="8"><rect x="0" y="5.2" width="4" height="2.8" fill="#9a9a9a"/><path d="M4,7.5V1L7.8,5.8" stroke="#111" stroke-width="1.4" fill="none"/><polygon points="9.2,8 5.8,7.6 9.2,4.2" fill="#111"/></svg>
<svg style="position:absolute;left:60.5px;top:31.9px" width="7" height="8"><path d="M3.5,0V6" stroke="#111" stroke-width="1.6"/><polygon points="0.3,4.2 6.7,4.2 3.5,8" fill="#111"/></svg>
<svg style="position:absolute;left:75px;top:32px" width="10" height="9"><path d="M8.8,0.9C7.6,0.6 6.6,1.6 5.8,3.4C5.2,4.8 4.3,5.4 2.8,5.4" stroke="#111" stroke-width="1.6" fill="none"/><polygon points="0.4,5.5 3.6,2.6 3.6,8.2" fill="#111"/></svg>
<svg style="position:absolute;left:90.5px;top:32px" width="8" height="9"><path d="M7,7.4H3.6A2.6,2.6 0 0 1 3.4,2.4H5" stroke="#111" stroke-width="1.7" fill="none"/><polygon points="4.6,0 7.6,2.4 4.6,4.8" fill="#111"/></svg>
<svg style="position:absolute;left:112.5px;top:33px" width="6" height="7"><polygon points="0,0 4.8,3.4 0,6.8" fill="#111"/></svg>
<svg style="position:absolute;left:125.8px;top:33px" width="7" height="7"><rect x="0" y="0" width="2.2" height="6.8" fill="#111"/><rect x="4" y="0" width="2.2" height="6.8" fill="#111"/></svg>
<svg style="position:absolute;left:145px;top:31.8px" width="10" height="9.5"><rect x="0" y="0" width="9.6" height="9.2" fill="#fafafa"/><text x="0.4" y="3.6" font-size="3.8" font-family="Liberation Sans" font-weight="bold" fill="#333">MIX</text><rect x="0.8" y="4.5" width="1" height="3" fill="#333"/><path d="M3,5.5H9M3,7.8H9" stroke="#3050e0" stroke-width="1" stroke-dasharray="1.2,0.8"/></svg>
<div class="s" style="left:166.2px;top:30.6px;font-size:10px;font-weight:bold;color:#111;line-height:12px">?</div>
<svg style="position:absolute;left:179.5px;top:32.5px" width="10" height="9"><polygon points="0,0 0,7.5 2,5.6 3.6,8.6 5,8 3.6,5 6,5" fill="#111"/></svg>
<div class="s" style="left:184.2px;top:31.3px;font-size:8.5px;font-weight:bold;color:#111;line-height:10px">?</div>
<svg style="position:absolute;left:200px;top:31.2px" width="10" height="10"><polygon points="3,0.3 7,0.3 9.7,3 9.7,7 7,9.7 3,9.7 0.3,7 0.3,3" fill="#bdbdbd"/><text x="1.2" y="6.2" font-size="3.2" font-family="Liberation Sans" font-weight="bold" fill="#e8e8e8">STOP</text></svg>
<svg style="position:absolute;left:219.6px;top:31.5px" width="10" height="10"><rect x="0" y="0" width="9.6" height="9.6" fill="#eeeeee"/><path d="M1,2H8.5M1,4.8H4M5.5,4.8H8.5M1,7.5H8.5" stroke="#9a9a9a" stroke-width="1.2"/><rect x="4.2" y="5.5" width="4" height="3" fill="#fff"/></svg>
<svg style="position:absolute;left:235px;top:31.5px" width="10" height="10"><rect x="0" y="0" width="9.6" height="9.6" fill="#eaeaea"/><path d="M1.5,1V9M4.5,1V9M7.5,1V9" stroke="#6a6a6a" stroke-width="1"/><path d="M0.5,3H3M3.5,5H6M6.5,3.5H9" stroke="#333" stroke-width="1.2"/></svg>
<svg style="position:absolute;left:250px;top:31.5px" width="10" height="10"><rect x="0.7" y="0.7" width="8.4" height="8.4" rx="1.5" fill="#808080" stroke="#222" stroke-width="1.2"/></svg>
<svg style="position:absolute;left:268.75px;top:31.5px" width="11" height="10"><rect x="1" y="0.5" width="9.5" height="9" fill="#c6e6ea"/><polygon points="5.2,0 7,2 5.2,4 3.4,2" fill="#1c1cc8"/><circle cx="2.8" cy="6.8" r="2" stroke="#222" stroke-width="1.3" fill="none"/><circle cx="6.8" cy="6.8" r="2" stroke="#222" stroke-width="1.3" fill="none"/><path d="M8.8,6.5L10.2,2.5" stroke="#222" stroke-width="1"/></svg>
<svg style="position:absolute;left:284.2px;top:31.5px" width="11" height="10"><rect x="1" y="0.5" width="9.5" height="9" fill="#c6e6ea"/><rect x="2" y="1.5" width="7" height="3" fill="#dcdcdc"/><circle cx="2.8" cy="6.8" r="2" stroke="#222" stroke-width="1.3" fill="none"/><circle cx="6.8" cy="6.8" r="2" stroke="#222" stroke-width="1.3" fill="none"/><path d="M8.8,6.5L10.2,2.5" stroke="#222" stroke-width="1"/></svg>
<svg style="position:absolute;left:299.2px;top:31.5px" width="11" height="10"><rect x="1" y="0.5" width="9.5" height="9" fill="#c6e6ea"/><rect x="3" y="1" width="5" height="3.5" fill="#3a5adc"/><circle cx="2.8" cy="6.8" r="2" stroke="#222" stroke-width="1.3" fill="none"/><circle cx="6.8" cy="6.8" r="2" stroke="#222" stroke-width="1.3" fill="none"/><path d="M8.8,6.5L10.2,2.5" stroke="#222" stroke-width="1"/></svg>
<svg style="position:absolute;left:319.2px;top:31.2px" width="11" height="11"><polygon points="5.5,0.3 10.5,2.7 10.5,8.3 5.5,10.7 0.5,8.3 0.5,2.7" fill="#d01010"/><polygon points="5.5,0.3 10.5,2.7 5.5,5 0.5,2.7" fill="#f24040"/><polygon points="5.5,5 10.5,2.7 10.5,8.3 5.5,10.7" fill="#900808"/><rect x="3.5" y="5.3" width="3" height="2.3" fill="#fff" opacity="0.85"/></svg>
<svg style="position:absolute;left:336.7px;top:31.5px" width="6" height="10"><circle cx="3" cy="1.6" r="1.5" fill="#2a8ae0"/><rect x="1.8" y="4" width="2.4" height="4.5" fill="#2a8ae0"/><rect x="0.6" y="8.2" width="4.8" height="1.4" fill="#2a8ae0"/></svg>
<svg style="position:absolute;left:348.75px;top:31.3px" width="11" height="11"><path d="M1.5,9.5L6,5" stroke="#222" stroke-width="2.8" stroke-linecap="round"/><path d="M1.5,9.5L6,5" stroke="#fff" stroke-width="1.2" stroke-linecap="round"/><circle cx="7.6" cy="3.4" r="2.8" fill="#fff" stroke="#222" stroke-width="1.1"/><rect x="7.2" y="0" width="3.2" height="3" fill="#f0f0f0" transform="rotate(45 8.8 1.5)"/></svg>
<svg style="position:absolute;left:1190px;top:716px" width="9" height="9"><g fill="#bcbcbc"><rect x="6" y="1" width="1.3" height="1.3"/><rect x="3.5" y="3.5" width="1.3" height="1.3"/><rect x="6" y="3.5" width="1.3" height="1.3"/><rect x="1" y="6" width="1.3" height="1.3"/><rect x="3.5" y="6" width="1.3" height="1.3"/><rect x="6" y="6" width="1.3" height="1.3"/></g></svg>
<div style="position:absolute;left:4.6px;top:24px;width:3.3000000000000007px;height:0.9px;background:#6a6a6a"></div>
<div style="position:absolute;left:24.4px;top:24px;width:3.5px;height:0.9px;background:#6a6a6a"></div>
<div style="position:absolute;left:45.8px;top:24px;width:3.8000000000000043px;height:0.9px;background:#6a6a6a"></div>
<div style="position:absolute;left:73.9px;top:24px;width:3.299999999999997px;height:0.9px;background:#6a6a6a"></div>
<div style="position:absolute;left:88.8px;top:24px;width:3.5px;height:0.9px;background:#6a6a6a"></div>
<div style="position:absolute;left:115.8px;top:24px;width:3.4000000000000057px;height:0.9px;background:#6a6a6a"></div>
<div style="position:absolute;left:137.6px;top:24px;width:3.700000000000017px;height:0.9px;background:#6a6a6a"></div>
<div style="position:absolute;left:161px;top:24px;width:5.599999999999994px;height:0.9px;background:#6a6a6a"></div>
<div style="position:absolute;left:185px;top:24px;width:3.4000000000000057px;height:0.9px;background:#6a6a6a"></div>
<div style="position:absolute;left:210.6px;top:24px;width:3.200000000000017px;height:0.9px;background:#6a6a6a"></div>
<div style="position:absolute;left:237.6px;top:24px;width:3.5999999999999943px;height:0.9px;background:#6a6a6a"></div>
<div style="position:absolute;left:287.6px;top:24px;width:6.599999999999966px;height:0.9px;background:#6a6a6a"></div>
<div style="position:absolute;left:323.6px;top:24px;width:3.7999999999999545px;height:0.9px;background:#6a6a6a"></div></body></html>
